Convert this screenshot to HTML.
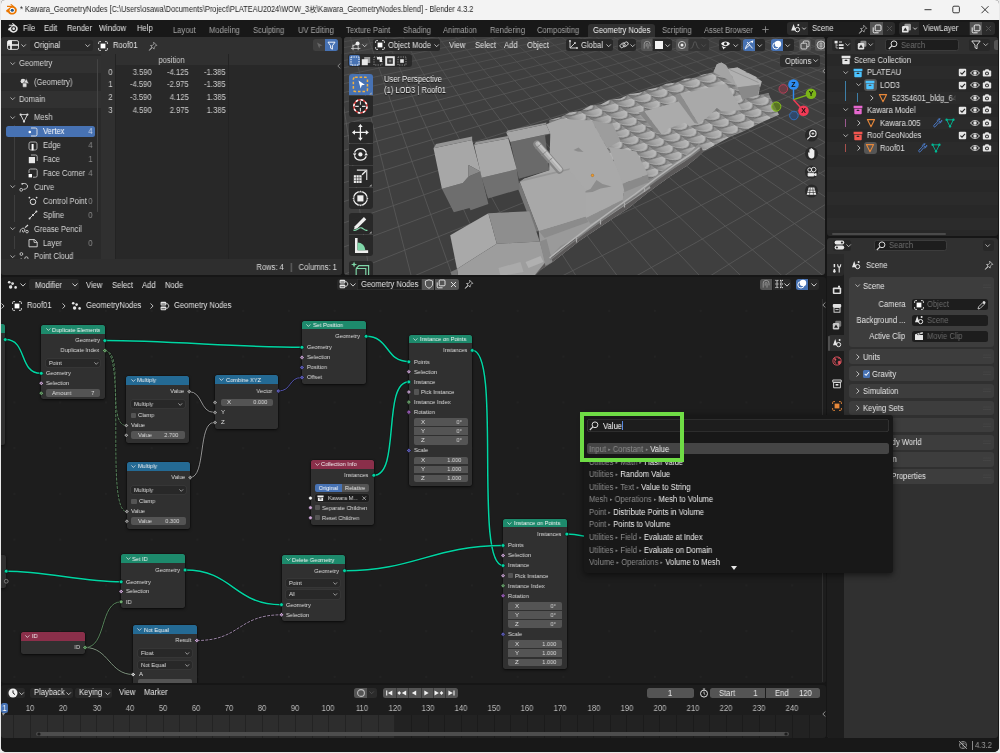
<!DOCTYPE html><html><head><meta charset="utf-8"><title>Blender</title><style>*{box-sizing:border-box;margin:0;padding:0}
html,body{width:1000px;height:753px;overflow:hidden;background:#e9e9e9;font-family:"Liberation Sans",sans-serif;font-size:8.3px;color:#d8d8d8}
#win{position:absolute;left:0;top:0;width:1000px;height:753px;background:#e9e9e9;overflow:hidden}
#frame{position:absolute;left:1px;top:0;width:998px;height:751.5px;background:#161616;border-radius:4px 4px 5px 5px}
#tm{position:absolute;left:1px;top:0;width:998px;height:37px;overflow:hidden;border-radius:4px 4px 0 0}
.a{position:absolute}
.t{position:absolute;white-space:nowrap;line-height:10px;height:10px;margin-top:-.7px;will-change:transform;transform:scaleX(.915);transform-origin:0 50%}
.t.r{transform-origin:100% 50%}
.t.c{transform-origin:50% 50%}
.area{position:absolute;overflow:hidden;border-radius:3px}
svg{position:absolute;overflow:visible}
.mn{color:#e4e4e4}
.tb{color:#a4a4a4}

#tm .t{margin-top:0}
</style></head><body>
<div id="win"><div id="frame"></div>
<div id="tm"><div class="a" style="left:0;top:0;width:998px;height:19.5px;background:#f3f3f3"></div>
<svg style="left:4px;top:4px" width="12" height="11" viewBox="0 0 24 22"><path d="M2 13 L11 6 L4 6 L4 3.6 L14 3.6 L10.5 1 L12.5 0 L22 7.5 C25 11 24 17 19 20 C14 22.5 8 21 6 16.5 L3.5 16.5 Z" fill="#ea7600"/><circle cx="14.5" cy="12.5" r="5.2" fill="#fff"/><circle cx="14.5" cy="12.5" r="3.2" fill="#265787"/></svg>
<div class="t" style="left:19px;top:5.4px;font-size:8.2px;color:#1b1b1b;transform-origin:0 50%;transform:scaleX(0.899)">* Kawara_GeometryNodes [C:\Users\osawa\Documents\Project\PLATEAU2024\WOW_3枚\Kawara_GeometryNodes.blend] - Blender 4.3.2</div>
<svg style="left:920px;top:3px" width="75" height="14" viewBox="0 0 75 14"><g stroke="#222" stroke-width="0.9" fill="none"><path d="M3.5 6.7h7"/><rect x="31.8" y="3.2" width="6.6" height="6.6" rx="1.2"/><path d="M60.5 3.2l7 7M67.5 3.2l-7 7"/></g></svg>
<div class="a" style="left:0;top:19.5px;width:998px;height:17.5px;background:#181818"></div>
<svg style="left:6px;top:23px" width="11" height="10" viewBox="0 0 24 22"><path d="M2 13 L11 6 L4 6 L4 3.6 L14 3.6 L10.5 1 L12.5 0 L22 7.5 C25 11 24 17 19 20 C14 22.5 8 21 6 16.5 L3.5 16.5 Z" fill="#e6e6e6"/><circle cx="14.5" cy="12.5" r="5.4" fill="#181818"/><circle cx="14.5" cy="12.5" r="3" fill="#e6e6e6"/></svg>
<div class="t mn" style="left:21.6px;top:23px">File</div>
<div class="t mn" style="left:43px;top:23px">Edit</div>
<div class="t mn" style="left:65.6px;top:23px">Render</div>
<div class="t mn" style="left:98.4px;top:23px">Window</div>
<div class="t mn" style="left:135.6px;top:23px">Help</div>
<div class="t tb" style="left:172.4px;top:25px">Layout</div>
<div class="t tb" style="left:207.6px;top:25px">Modeling</div>
<div class="t tb" style="left:251.6px;top:25px">Sculpting</div>
<div class="t tb" style="left:296.6px;top:25px">UV Editing</div>
<div class="t tb" style="left:345.4px;top:25px">Texture Paint</div>
<div class="t tb" style="left:402px;top:25px">Shading</div>
<div class="t tb" style="left:442.4px;top:25px">Animation</div>
<div class="t tb" style="left:489.4px;top:25px">Rendering</div>
<div class="t tb" style="left:536px;top:25px">Compositing</div>
<div class="a" style="left:587px;top:23.5px;width:66.5px;height:14px;background:#303030;border-radius:3px 3px 0 0"></div>
<div class="t" style="left:592px;top:25px;color:#f4f4f4">Geometry Nodes</div>
<div class="t tb" style="left:660.6px;top:25px">Scripting</div>
<div class="t tb" style="left:703.4px;top:25px">Asset Browser</div>
<svg style="left:761px;top:26px" width="7" height="7" viewBox="0 0 7 7"><path d="M3.5 0.3v6.4M0.3 3.5h6.4" stroke="#999" stroke-width="0.8"/></svg>
<!-- scene selector -->
<div class="a" style="left:786px;top:22px;width:108px;height:12.5px;background:#2b2b2b;border-radius:3px"></div>
<div class="a" style="left:806.6px;top:22px;width:62px;height:12.5px;background:#1d1d1d"></div>
<svg style="left:789px;top:23px" width="18" height="11" viewBox="0 0 18 11"><path d="M3.6 1 L6 7.6 L1.2 7.6Z" fill="#e6e6e6"/><circle cx="7.4" cy="6.6" r="2.2" fill="none" stroke="#e6e6e6" stroke-width="1"/><circle cx="8.3" cy="1.9" r="1" fill="#e6e6e6"/><path d="M12.3 4.6l1.8 1.8 1.8-1.8" stroke="#ddd" stroke-width=".9" fill="none"/></svg>
<div class="t" style="left:810.6px;top:23.2px;color:#e6e6e6">Scene</div>
<svg style="left:857px;top:23.5px" width="10" height="10" viewBox="0 0 10 10"><path d="M5.6 1.2l3.2 3.2-1 .2-1.6 1.6-.1 1.9-1.5-1.5L1.2 9.4l2.8-3.4-1.5-1.5 1.9-.1 1.6-1.6z" fill="none" stroke="#aaa" stroke-width=".8" stroke-linejoin="round"/></svg>
<div class="a" style="left:869px;top:22px;width:12.5px;height:12.5px;background:#545454"></div>
<svg style="left:870.5px;top:23.5px" width="10" height="10" viewBox="0 0 10 10"><rect x="3.2" y="1" width="5.8" height="5.8" rx="1" fill="none" stroke="#eee" stroke-width="1"/><path d="M1.2 3.4v4.2a1.2 1.2 0 0 0 1.2 1.2h4.2" fill="none" stroke="#eee" stroke-width="1"/></svg>
<svg style="left:884.5px;top:25px" width="7" height="7" viewBox="0 0 7 7"><path d="M1 1l5 5M6 1l-5 5" stroke="#555" stroke-width=".9"/></svg>
<!-- view layer -->
<div class="a" style="left:898px;top:22px;width:96px;height:12.5px;background:#2b2b2b;border-radius:3px"></div>
<div class="a" style="left:918px;top:22px;width:50px;height:12.5px;background:#1d1d1d"></div>
<svg style="left:900px;top:23px" width="18" height="11" viewBox="0 0 18 11"><rect x="3.4" y=".8" width="6.6" height="6.6" rx="1.2" fill="#9a9a9a"/><rect x="1" y="3" width="6.6" height="6.6" rx="1.2" fill="#e6e6e6"/><path d="M4.3 4.6l2 3.2H2.3z" fill="#2b2b2b"/><path d="M12.3 4.6l1.8 1.8 1.8-1.8" stroke="#ddd" stroke-width=".9" fill="none"/></svg>
<div class="t" style="left:922px;top:23.2px;color:#e6e6e6">ViewLayer</div>
<div class="a" style="left:968.6px;top:22px;width:12.5px;height:12.5px;background:#545454"></div>
<svg style="left:970px;top:23.5px" width="10" height="10" viewBox="0 0 10 10"><rect x="3.2" y="1" width="5.8" height="5.8" rx="1" fill="none" stroke="#eee" stroke-width="1"/><path d="M1.2 3.4v4.2a1.2 1.2 0 0 0 1.2 1.2h4.2" fill="none" stroke="#eee" stroke-width="1"/></svg>
<svg style="left:984px;top:25px" width="7" height="7" viewBox="0 0 7 7"><path d="M1 1l5 5M6 1l-5 5" stroke="#555" stroke-width=".9"/></svg>
</div>
<div class="area" id="ss" style="left:1px;top:37px;width:341px;height:238px;background:#282828">
<div class="a" style="left:0.0px;top:0.0px;width:341.0px;height:17.0px;background:#303030;"></div>
<svg style="left:6.4px;top:3.4px" width="12" height="10" viewBox="0 0 12 10"><rect x=".5" y=".6" width="11" height="8.8" rx="1.6" fill="#303030" stroke="#e8e8e8" stroke-width=".9"/><path d="M.5 2.200a1.600 1.600 0 0 1 1.600-1.600h2.700v4H.5z" fill="#f2f2f2"/><path d="M4 .6v8.800" stroke="#f2f2f2" stroke-width="1.700"/><path d="M.5 5h11" stroke="#f2f2f2" stroke-width="1.500"/></svg>
<svg style="left:19.5px;top:7.0px" width="5.3" height="3.5" viewBox="0 0 6 4"><path d="M.5 .5l2.5 2.6 2.5-2.6" stroke="#ddd" stroke-width=".9" fill="none"/></svg>
<div class="a" style="left:29.0px;top:2.6px;width:62.5px;height:11.6px;background:#282828;border-radius:2.5px"></div>
<div class="t" style="left:33.0px;top:4.0px;color:#e6e6e6;">Original</div>
<svg style="left:83.5px;top:7.0px" width="5.3" height="3.5" viewBox="0 0 6 4"><path d="M.5 .5l2.5 2.6 2.5-2.6" stroke="#ddd" stroke-width=".9" fill="none"/></svg>
<svg style="left:97.0px;top:3.5px" width="10" height="10" viewBox="0 0 10 10"><rect x="2.6" y="2.6" width="4.8" height="4.8" fill="#fff"/><path d="M.6 3V1.6a1 1 0 0 1 1-1H3M7 .6h1.4a1 1 0 0 1 1 1V3M9.4 7v1.4a1 1 0 0 1-1 1H7M3 9.4H1.6a1 1 0 0 1-1-1V7" stroke="#e0e0e0" stroke-width=".9" fill="none"/></svg>
<div class="t" style="left:112.0px;top:4.0px;color:#e6e6e6;">Roof01</div>
<svg style="left:147.0px;top:3.5px" width="10" height="10" viewBox="0 0 10 10"><path d="M5.6 1.2l3.2 3.2-1 .2-1.6 1.6-.1 1.9-1.5-1.5L1.2 9.4l2.8-3.4-1.5-1.5 1.9-.1 1.6-1.6z" fill="none" stroke="#aaa" stroke-width=".8" stroke-linejoin="round"/></svg>
<div class="a" style="left:311.5px;top:2.2px;width:12.5px;height:12.2px;background:#3f3f3f;border-radius:2.5px 0 0 2.5px"></div>
<svg style="left:313.5px;top:3.8px" width="9" height="9" viewBox="0 0 9 9"><path d="M2 1.6l5.6 2.8-2.6.6-.8 2.6z" fill="#666"/></svg>
<div class="a" style="left:324.0px;top:2.2px;width:12.5px;height:12.2px;background:#4772b3;border-radius:0 2.5px 2.5px 0"></div>
<svg style="left:325.8px;top:3.8px" width="9" height="9" viewBox="0 0 9 9"><path d="M1 1.2h7L5.4 4.8v3.4l-1.8-1V4.8z" fill="none" stroke="#fff" stroke-width=".9" stroke-linejoin="round"/></svg>
<div class="a" style="left:0.0px;top:17.0px;width:100.0px;height:205.0px;background:#2a2a2a;"></div>
<div class="a" style="left:0.0px;top:19.0px;width:100.0px;height:16.6px;background:#313131;"></div>
<div class="a" style="left:0.0px;top:54.2px;width:100.0px;height:16.6px;background:#313131;"></div>
<svg style="left:8.6px;top:24.7px" width="5.3" height="3.5" viewBox="0 0 6 4"><path d="M.5 .5l2.5 2.6 2.5-2.6" stroke="#c8c8c8" stroke-width=".9" fill="none"/></svg>
<div class="t" style="left:18.0px;top:22.1px;color:#d8d8d8;">Geometry</div>
<svg style="left:19.0px;top:40.5px" width="10" height="10" viewBox="0 0 10 10"><circle cx="3" cy="3.2" r="2.4" fill="#ddd"/><path d="M6.2 0.6l2.6 4.8H3.6z" fill="#ddd" stroke="#2a2a2a" stroke-width=".5"/><rect x="2.6" y="5" width="4.2" height="4.2" rx=".8" fill="#ddd" stroke="#2a2a2a" stroke-width=".5"/></svg>
<div class="t" style="left:33.3px;top:40.9px;color:#d8d8d8;">(Geometry)</div>
<svg style="left:8.6px;top:60.0px" width="5.3" height="3.5" viewBox="0 0 6 4"><path d="M.5 .5l2.5 2.6 2.5-2.6" stroke="#c8c8c8" stroke-width=".9" fill="none"/></svg>
<div class="t" style="left:18.0px;top:57.4px;color:#d8d8d8;">Domain</div>
<div class="a" style="left:96.3px;top:21.5px;width:1.0px;height:153.0px;background:#444;border-radius:1px"></div>
<div class="a" style="left:12.6px;top:87.5px;width:0.8px;height:55.0px;background:#3e3e3e;"></div>
<div class="a" style="left:12.6px;top:157.5px;width:0.8px;height:27.0px;background:#3e3e3e;"></div>
<div class="a" style="left:12.6px;top:199.0px;width:0.8px;height:13.0px;background:#3e3e3e;"></div>
<svg style="left:9.4px;top:78.7px" width="5.3" height="3.5" viewBox="0 0 6 4"><path d="M.5 .5l2.5 2.6 2.5-2.6" stroke="#c8c8c8" stroke-width=".9" fill="none"/></svg>
<svg style="left:18.3px;top:75.7px" width="10" height="10" viewBox="0 0 10 10"><path d="M1.6 1.6h6.8L5 8.6z" fill="none" stroke="#ddd" stroke-width=".9"/><circle cx="1.6" cy="1.6" r="1.1" fill="#ddd"/><circle cx="8.4" cy="1.6" r="1.1" fill="#ddd"/><circle cx="5" cy="8.6" r="1.1" fill="#ddd"/></svg>
<div class="t" style="left:33.0px;top:76.1px;color:#d8d8d8;">Mesh</div>
<div class="a" style="left:5.4px;top:89.0px;width:89.0px;height:11.2px;background:#4772b3;border-radius:2.5px"></div>
<svg style="left:27.2px;top:89.6px" width="10" height="10" viewBox="0 0 10 10"><path d="M3 1h4.4a1.6 1.6 0 0 1 1.6 1.6v4.8A1.6 1.6 0 0 1 7.4 9H3" fill="none" stroke="#e8e8e8" stroke-width=".9"/><circle cx="1.8" cy="5" r="1.3" fill="#fff"/></svg>
<div class="t" style="left:41.8px;top:90.0px;color:#fff;">Vertex</div>
<div class="t r" style="right:249.4px;top:90.0px;color:#c8d4ea;">4</div>
<svg style="left:27.2px;top:103.5px" width="10" height="10" viewBox="0 0 10 10"><rect x="1" y="1" width="8" height="8" rx="1.8" fill="none" stroke="#bbb" stroke-width=".9"/><rect x="3.6" y="3" width="2" height="6.4" fill="#fff"/></svg>
<div class="t" style="left:41.8px;top:103.9px;color:#d8d8d8;">Edge</div>
<div class="t r" style="right:249.4px;top:103.9px;color:#8a8a8a;">4</div>
<svg style="left:27.2px;top:117.4px" width="10" height="10" viewBox="0 0 10 10"><path d="M3 1h4.6A1.6 1.6 0 0 1 9.2 2.6V7" fill="none" stroke="#bbb" stroke-width=".9"/><rect x=".8" y="3" width="6.2" height="6.2" fill="#e8e8e8"/></svg>
<div class="t" style="left:41.8px;top:117.8px;color:#d8d8d8;">Face</div>
<div class="t r" style="right:249.4px;top:117.8px;color:#8a8a8a;">1</div>
<svg style="left:27.2px;top:131.3px" width="10" height="10" viewBox="0 0 10 10"><path d="M1 5V2.6A1.6 1.6 0 0 1 2.6 1h5A1.6 1.6 0 0 1 9.2 2.6v5A1.6 1.6 0 0 1 7.6 9.2H5" fill="none" stroke="#bbb" stroke-width=".9"/><rect x=".6" y="6" width="3.4" height="3.4" fill="#fff"/></svg>
<div class="t" style="left:41.8px;top:131.7px;color:#d8d8d8;">Face Corner</div>
<div class="t r" style="right:249.4px;top:131.7px;color:#8a8a8a;">4</div>
<svg style="left:9.4px;top:148.2px" width="5.3" height="3.5" viewBox="0 0 6 4"><path d="M.5 .5l2.5 2.6 2.5-2.6" stroke="#c8c8c8" stroke-width=".9" fill="none"/></svg>
<svg style="left:18.3px;top:145.2px" width="10" height="10" viewBox="0 0 10 10"><path d="M3.6 1.6C9.5 .4 10.6 7 4.4 7.4" fill="none" stroke="#ddd" stroke-width=".9"/><circle cx="2.2" cy="7.8" r="1.4" fill="none" stroke="#ddd" stroke-width=".8"/><circle cx="3.2" cy="1.8" r=".9" fill="#ddd"/></svg>
<div class="t" style="left:33.0px;top:145.6px;color:#d8d8d8;">Curve</div>
<svg style="left:27.2px;top:159.1px" width="10" height="10" viewBox="0 0 10 10"><circle cx="5" cy="5.8" r="2.8" fill="none" stroke="#ddd" stroke-width="1"/><circle cx="1.4" cy="1.6" r=".9" fill="#ddd"/><circle cx="8.6" cy="1.6" r=".9" fill="#ddd"/></svg>
<div class="t" style="left:41.8px;top:159.5px;color:#d8d8d8;">Control Point</div>
<div class="t r" style="right:249.4px;top:159.5px;color:#8a8a8a;">0</div>
<svg style="left:27.2px;top:173.0px" width="10" height="10" viewBox="0 0 10 10"><path d="M1.6 8.4L8.4 1.6" stroke="#ddd" stroke-width=".9"/><circle cx="1.6" cy="8.4" r="1" fill="#ddd"/><circle cx="8.4" cy="1.6" r="1" fill="#ddd"/><circle cx="5" cy="5" r="1.1" fill="#ddd"/></svg>
<div class="t" style="left:41.8px;top:173.4px;color:#d8d8d8;">Spline</div>
<div class="t r" style="right:249.4px;top:173.4px;color:#8a8a8a;">0</div>
<svg style="left:9.4px;top:189.9px" width="5.3" height="3.5" viewBox="0 0 6 4"><path d="M.5 .5l2.5 2.6 2.5-2.6" stroke="#c8c8c8" stroke-width=".9" fill="none"/></svg>
<svg style="left:18.3px;top:186.9px" width="10" height="10" viewBox="0 0 10 10"><path d="M1 8.4C1 4 5.6 3 5.8 5.8 6 8.6 2.6 8.8 3.6 6.2" fill="none" stroke="#ddd" stroke-width=".9"/><path d="M6 3.6L9 1" stroke="#ddd" stroke-width="1.2"/><circle cx="8" cy="7.6" r="1.3" fill="none" stroke="#ddd" stroke-width=".8"/></svg>
<div class="t" style="left:33.0px;top:187.3px;color:#d8d8d8;">Grease Pencil</div>
<svg style="left:27.2px;top:200.8px" width="10" height="10" viewBox="0 0 10 10"><path d="M1 1.6h5.6L9.2 4v4.8H1z" fill="none" stroke="#ddd" stroke-width=".9" stroke-linejoin="round"/><path d="M6 1.6V4.4h3" fill="none" stroke="#ddd" stroke-width=".8"/></svg>
<div class="t" style="left:41.8px;top:201.2px;color:#d8d8d8;">Layer</div>
<div class="t r" style="right:249.4px;top:201.2px;color:#8a8a8a;">0</div>
<svg style="left:9.4px;top:217.7px" width="5.3" height="3.5" viewBox="0 0 6 4"><path d="M.5 .5l2.5 2.6 2.5-2.6" stroke="#c8c8c8" stroke-width=".9" fill="none"/></svg>
<svg style="left:18.3px;top:214.7px" width="10" height="10" viewBox="0 0 10 10"><circle cx="2.4" cy="2" r="1.4" fill="none" stroke="#ddd" stroke-width=".8"/><circle cx="7.4" cy="6.4" r="1.6" fill="none" stroke="#ddd" stroke-width=".8"/><circle cx="2.2" cy="7.4" r="1" fill="#ddd"/></svg>
<div class="t" style="left:33.0px;top:215.1px;color:#d8d8d8;">Point Cloud</div>
<div class="a" style="left:100.3px;top:17.0px;width:13.8px;height:205.0px;background:#303030;"></div>
<div class="a" style="left:100.3px;top:17.0px;width:240.0px;height:10.8px;background:#303030;"></div>
<div class="a" style="left:113.8px;top:17.0px;width:0.7px;height:205.0px;background:#232323;"></div>
<div class="a" style="left:227.2px;top:17.0px;width:0.7px;height:205.0px;background:#232323;"></div>
<div class="t c" style="left:114px;top:18.3px;width:113px;text-align:center;color:#d0d0d0">position</div>
<div class="t r" style="right:229.6px;top:30.2px;color:#d0d0d0;">0</div>
<div class="t r" style="right:190.6px;top:30.2px;color:#d0d0d0;">3.590</div>
<div class="t r" style="right:153.4px;top:30.2px;color:#d0d0d0;">-4.125</div>
<div class="t r" style="right:116.4px;top:30.2px;color:#d0d0d0;">-1.385</div>
<div class="t r" style="right:229.6px;top:42.9px;color:#d0d0d0;">1</div>
<div class="t r" style="right:190.6px;top:42.9px;color:#d0d0d0;">-4.590</div>
<div class="t r" style="right:153.4px;top:42.9px;color:#d0d0d0;">-2.975</div>
<div class="t r" style="right:116.4px;top:42.9px;color:#d0d0d0;">-1.385</div>
<div class="t r" style="right:229.6px;top:55.7px;color:#d0d0d0;">2</div>
<div class="t r" style="right:190.6px;top:55.7px;color:#d0d0d0;">-3.590</div>
<div class="t r" style="right:153.4px;top:55.7px;color:#d0d0d0;">4.125</div>
<div class="t r" style="right:116.4px;top:55.7px;color:#d0d0d0;">1.385</div>
<div class="t r" style="right:229.6px;top:68.5px;color:#d0d0d0;">3</div>
<div class="t r" style="right:190.6px;top:68.5px;color:#d0d0d0;">4.590</div>
<div class="t r" style="right:153.4px;top:68.5px;color:#d0d0d0;">2.975</div>
<div class="t r" style="right:116.4px;top:68.5px;color:#d0d0d0;">1.385</div>
<svg style="left:336.4px;top:25.5px" width="4" height="6" viewBox="0 0 4 6"><path d="M3.4 .5L.8 3l2.6 2.5" stroke="#999" stroke-width=".8" fill="none"/></svg>
<div class="a" style="left:0.0px;top:222.0px;width:341.0px;height:16.0px;background:#2e2e2e;"></div>
<div class="t r" style="right:4.8px;top:225.4px;color:#dcdcdc;">Rows: 4 &nbsp;&nbsp;<span style="color:#999">|</span>&nbsp;&nbsp; Columns: 1</div>
</div>
<div class="area" id="vp" style="left:343.5px;top:37px;width:481.5px;height:237.6px;background:#3f3f3f">
<svg style="left:0;top:0" width="481.5" height="237.6" viewBox="343.5 37 481.5 237.6"><defs><linearGradient id="gf" x1="0" y1="0" x2="0" y2="1"><stop offset="0" stop-color="#3f3f3f" stop-opacity=".45"/><stop offset=".3" stop-color="#3f3f3f" stop-opacity="0"/></linearGradient></defs><g stroke="#5a5a5a" stroke-width=".8">
<path d="M-309.2 30.0L-1284.6 300.0"/>
<path d="M-292.3 30.0L-1241.0 300.0"/>
<path d="M-275.5 30.0L-1197.4 300.0"/>
<path d="M-258.6 30.0L-1153.7 300.0"/>
<path d="M-241.7 30.0L-1110.1 300.0"/>
<path d="M-224.9 30.0L-1066.5 300.0"/>
<path d="M-208.0 30.0L-1022.9 300.0"/>
<path d="M-191.2 30.0L-979.2 300.0"/>
<path d="M-174.3 30.0L-935.6 300.0"/>
<path d="M-157.5 30.0L-892.0 300.0"/>
<path d="M-140.6 30.0L-848.4 300.0"/>
<path d="M-123.8 30.0L-804.7 300.0"/>
<path d="M-106.9 30.0L-761.1 300.0"/>
<path d="M-90.1 30.0L-717.5 300.0"/>
<path d="M-73.2 30.0L-673.9 300.0"/>
<path d="M-56.3 30.0L-630.2 300.0"/>
<path d="M-39.5 30.0L-586.6 300.0"/>
<path d="M-22.6 30.0L-543.0 300.0"/>
<path d="M-5.8 30.0L-499.4 300.0"/>
<path d="M11.1 30.0L-455.7 300.0"/>
<path d="M27.9 30.0L-412.1 300.0"/>
<path d="M44.8 30.0L-368.5 300.0"/>
<path d="M61.6 30.0L-324.9 300.0"/>
<path d="M78.5 30.0L-281.2 300.0"/>
<path d="M95.4 30.0L-237.6 300.0"/>
<path d="M112.2 30.0L-194.0 300.0"/>
<path d="M129.1 30.0L-150.4 300.0"/>
<path d="M145.9 30.0L-106.7 300.0"/>
<path d="M162.8 30.0L-63.1 300.0"/>
<path d="M179.6 30.0L-19.5 300.0"/>
<path d="M196.5 30.0L24.1 300.0"/>
<path d="M213.3 30.0L67.8 300.0"/>
<path d="M230.2 30.0L111.4 300.0"/>
<path d="M247.1 30.0L155.0 300.0"/>
<path d="M263.9 30.0L198.7 300.0"/>
<path d="M280.8 30.0L242.3 300.0"/>
<path d="M297.6 30.0L285.9 300.0"/>
<path d="M314.5 30.0L329.5 300.0"/>
<path d="M331.3 30.0L373.2 300.0"/>
<path d="M348.2 30.0L416.8 300.0"/>
<path d="M365.0 30.0L460.4 300.0"/>
<path d="M381.9 30.0L504.0 300.0"/>
<path d="M398.8 30.0L547.7 300.0"/>
<path d="M415.6 30.0L591.3 300.0"/>
<path d="M432.5 30.0L634.9 300.0"/>
<path d="M449.3 30.0L678.5 300.0"/>
<path d="M466.2 30.0L722.2 300.0"/>
<path d="M483.0 30.0L765.8 300.0"/>
<path d="M499.9 30.0L809.4 300.0"/>
<path d="M516.7 30.0L853.0 300.0"/>
<path d="M533.6 30.0L896.7 300.0"/>
<path d="M550.5 30.0L940.3 300.0"/>
<path d="M567.3 30.0L983.9 300.0"/>
<path d="M584.2 30.0L1027.5 300.0"/>
<path d="M601.0 30.0L1071.2 300.0"/>
<path d="M617.9 30.0L1114.8 300.0"/>
<path d="M634.7 30.0L1158.4 300.0"/>
<path d="M651.6 30.0L1202.0 300.0"/>
<path d="M668.4 30.0L1245.7 300.0"/>
<path d="M685.3 30.0L1289.3 300.0"/>
<path d="M702.1 30.0L1332.9 300.0"/>
<path d="M719.0 30.0L1376.5 300.0"/>
<path d="M735.9 30.0L1420.2 300.0"/>
<path d="M752.7 30.0L1463.8 300.0"/>
<path d="M769.6 30.0L1507.4 300.0"/>
<path d="M786.4 30.0L1551.0 300.0"/>
<path d="M803.3 30.0L1594.7 300.0"/>
<path d="M820.1 30.0L1638.3 300.0"/>
<path d="M837.0 30.0L1681.9 300.0"/>
<path d="M853.8 30.0L1725.5 300.0"/>
<path d="M870.7 30.0L1769.2 300.0"/>
<path d="M887.6 30.0L1812.8 300.0"/>
<path d="M904.4 30.0L1856.4 300.0"/>
<path d="M921.3 30.0L1900.0 300.0"/>
<path d="M938.1 30.0L1943.7 300.0"/>
<path d="M955.0 30.0L1987.3 300.0"/>
<path d="M971.8 30.0L2030.9 300.0"/>
<path d="M988.7 30.0L2074.5 300.0"/>
<path d="M1005.5 30.0L2118.2 300.0"/>
<path d="M1022.4 30.0L2161.8 300.0"/>
<path d="M1039.3 30.0L2205.4 300.0"/>
<path d="M1056.1 30.0L2249.1 300.0"/>
<path d="M1073.0 30.0L2292.7 300.0"/>
<path d="M1089.8 30.0L2336.3 300.0"/>
<path d="M1106.7 30.0L2379.9 300.0"/>
<path d="M1123.5 30.0L2423.6 300.0"/>
<path d="M1140.4 30.0L2467.2 300.0"/>
<path d="M1157.2 30.0L2510.8 300.0"/>
<path d="M1174.1 30.0L2554.4 300.0"/>
<path d="M1191.0 30.0L2598.1 300.0"/>
<path d="M1207.8 30.0L2641.7 300.0"/>
<path d="M1224.7 30.0L2685.3 300.0"/>
<path d="M1241.5 30.0L2728.9 300.0"/>
<path d="M1258.4 30.0L2772.6 300.0"/>
<path d="M1275.2 30.0L2816.2 300.0"/>
<path d="M1292.1 30.0L2859.8 300.0"/>
<path d="M1308.9 30.0L2903.4 300.0"/>
<path d="M1325.8 30.0L2947.1 300.0"/>
<path d="M1342.7 30.0L2990.7 300.0"/>
<path d="M1359.5 30.0L3034.3 300.0"/>
<path d="M-164.0 30.0L-2616.1 300.0"/>
<path d="M-133.7 30.0L-2537.9 300.0"/>
<path d="M-103.5 30.0L-2459.6 300.0"/>
<path d="M-73.2 30.0L-2381.3 300.0"/>
<path d="M-43.0 30.0L-2303.1 300.0"/>
<path d="M-12.8 30.0L-2224.8 300.0"/>
<path d="M17.5 30.0L-2146.6 300.0"/>
<path d="M47.7 30.0L-2068.3 300.0"/>
<path d="M77.9 30.0L-1990.0 300.0"/>
<path d="M108.2 30.0L-1911.8 300.0"/>
<path d="M138.4 30.0L-1833.5 300.0"/>
<path d="M168.7 30.0L-1755.2 300.0"/>
<path d="M198.9 30.0L-1677.0 300.0"/>
<path d="M229.1 30.0L-1598.7 300.0"/>
<path d="M259.4 30.0L-1520.4 300.0"/>
<path d="M289.6 30.0L-1442.2 300.0"/>
<path d="M319.9 30.0L-1363.9 300.0"/>
<path d="M350.1 30.0L-1285.7 300.0"/>
<path d="M380.3 30.0L-1207.4 300.0"/>
<path d="M410.6 30.0L-1129.1 300.0"/>
<path d="M440.8 30.0L-1050.9 300.0"/>
<path d="M471.0 30.0L-972.6 300.0"/>
<path d="M501.3 30.0L-894.3 300.0"/>
<path d="M531.5 30.0L-816.1 300.0"/>
<path d="M561.8 30.0L-737.8 300.0"/>
<path d="M592.0 30.0L-659.5 300.0"/>
<path d="M622.2 30.0L-581.3 300.0"/>
<path d="M652.5 30.0L-503.0 300.0"/>
<path d="M682.7 30.0L-424.7 300.0"/>
<path d="M712.9 30.0L-346.5 300.0"/>
<path d="M743.2 30.0L-268.2 300.0"/>
<path d="M773.4 30.0L-190.0 300.0"/>
<path d="M803.7 30.0L-111.7 300.0"/>
<path d="M833.9 30.0L-33.4 300.0"/>
<path d="M864.1 30.0L44.8 300.0"/>
<path d="M894.4 30.0L123.1 300.0"/>
<path d="M924.6 30.0L201.4 300.0"/>
<path d="M954.9 30.0L279.6 300.0"/>
<path d="M985.1 30.0L357.9 300.0"/>
<path d="M1015.3 30.0L436.2 300.0"/>
<path d="M1045.6 30.0L514.4 300.0"/>
<path d="M1075.8 30.0L592.7 300.0"/>
<path d="M1106.0 30.0L670.9 300.0"/>
<path d="M1136.3 30.0L749.2 300.0"/>
<path d="M1166.5 30.0L827.5 300.0"/>
<path d="M1196.8 30.0L905.7 300.0"/>
<path d="M1227.0 30.0L984.0 300.0"/>
<path d="M1257.2 30.0L1062.3 300.0"/>
<path d="M1287.5 30.0L1140.5 300.0"/>
<path d="M1317.7 30.0L1218.8 300.0"/>
<path d="M1348.0 30.0L1297.1 300.0"/>
<path d="M1378.2 30.0L1375.3 300.0"/>
<path d="M1408.4 30.0L1453.6 300.0"/>
<path d="M1438.7 30.0L1531.8 300.0"/>
<path d="M1468.9 30.0L1610.1 300.0"/>
<path d="M1499.1 30.0L1688.4 300.0"/>
<path d="M1529.4 30.0L1766.6 300.0"/>
<path d="M1559.6 30.0L1844.9 300.0"/>
<path d="M1589.9 30.0L1923.2 300.0"/>
<path d="M1620.1 30.0L2001.4 300.0"/>
<path d="M1650.3 30.0L2079.7 300.0"/>
<path d="M1680.6 30.0L2158.0 300.0"/>
<path d="M1710.8 30.0L2236.2 300.0"/>
<path d="M1741.1 30.0L2314.5 300.0"/>
<path d="M1771.3 30.0L2392.7 300.0"/>
<path d="M1801.5 30.0L2471.0 300.0"/>
<path d="M1831.8 30.0L2549.3 300.0"/>
<path d="M1862.0 30.0L2627.5 300.0"/>
<path d="M1892.2 30.0L2705.8 300.0"/>
<path d="M1922.5 30.0L2784.1 300.0"/>
<path d="M1952.7 30.0L2862.3 300.0"/>
<path d="M1983.0 30.0L2940.6 300.0"/>
<path d="M2013.2 30.0L3018.9 300.0"/>
<path d="M2043.4 30.0L3097.1 300.0"/>
<path d="M2073.7 30.0L3175.4 300.0"/>
<path d="M2103.9 30.0L3253.7 300.0"/>
<path d="M2134.1 30.0L3331.9 300.0"/>
<path d="M2164.4 30.0L3410.2 300.0"/>
<path d="M2194.6 30.0L3488.4 300.0"/>
<path d="M2224.9 30.0L3566.7 300.0"/>
</g><rect x="343.5" y="37" width="481.5" height="237.6" fill="url(#gf)"/>
<defs><linearGradient id="tg" x1="0" y1="0" x2="1" y2="0"><stop offset="0" stop-color="#808080"/><stop offset=".45" stop-color="#a4a4a4"/><stop offset="1" stop-color="#b9b9b9"/></linearGradient>
<pattern id="tiles" width="17" height="9.2" patternUnits="userSpaceOnUse" patternTransform="translate(566,118) rotate(-16.7) skewX(36)">
<rect width="17" height="9.2" fill="url(#tg)"/><path d="M0 3.600C4 9.800 13 9.800 17 3.600V9.200H0Z" fill="#6c6c6c" opacity=".5"/><path d="M0 3.600C4 9.800 13 9.800 17 3.600" stroke="#666" stroke-width=".9" fill="none" opacity=".9"/><path d="M0 1.600C4 7.800 13 7.800 17 1.600" stroke="#c2c2c2" stroke-width="1" fill="none" opacity=".55"/></pattern>
<linearGradient id="pipe" x1="0" y1="0" x2="1" y2="0"><stop offset="0" stop-color="#8a8a8a"/><stop offset=".45" stop-color="#bcbcbc"/><stop offset="1" stop-color="#929292"/></linearGradient></defs>
<polygon points="548.7,120.0 560.0,117.1 569.2,112.5 580.0,111.0 589.9,105.6 600.0,104.5 609.4,99.8 620.0,98.5 629.0,94.1 639.0,92.8 647.4,89.5 657.0,87.6 665.8,83.7 676.0,82.5 684.2,79.1 694.0,77.8 702.6,74.5 712.9,72.2 716.4,64.2 721.0,62.4 725.6,65.3 727.9,68.8 737.1,67.6 755.5,76.8 761.2,81.4 757.8,95.2 768.1,92.9 769.3,96.4 778.5,114.8 762.4,121.7 744.0,130.9 730.2,136.6 702.6,151.6 696.0,158.0 686.0,166.0 670.0,176.0 648.0,192.0 628.0,208.0 604.0,224.0 580.0,240.0 552.0,262.0 545.0,262.0 586.0,218.0 585.0,189.0 568.6,169.9 549.8,133.6" fill="url(#tiles)" />
<polygon points="702.6,151.6 696.0,158.0 686.0,166.0 670.0,176.0 648.0,192.0 628.0,208.0 604.0,224.0 580.0,240.0 552.0,262.0 540.0,270.0 532.0,278.0 528.0,270.0 536.0,262.0 548.0,254.0 576.0,232.0 600.0,216.0 624.0,200.0 644.0,184.0 666.0,168.0 682.0,158.0 692.0,150.0 698.6,143.6" fill="#8e8e8e" />
<polygon points="702.6,151.6 696.0,158.0 686.0,166.0 670.0,176.0 648.0,192.0 628.0,208.0 604.0,224.0 580.0,240.0 552.0,262.0 540.0,270.0 532.0,278.0 530.2,273.6 538.2,265.6 550.2,257.6 578.2,235.6 602.2,219.6 626.2,203.6 646.2,187.6 668.2,171.6 684.2,161.6 694.2,153.6 700.8,147.2" fill="#5b5959" />
<polygon points="545.6,124.2 560.0,119.0 591.0,120.5 606.0,147.0 624.4,183.8 622.0,200.0 586.0,218.0 538.2,231.1 519.4,181.9 523.6,178.7 548.7,170.3 549.8,133.6" fill="#a9a9a9" />
<polygon points="538.2,231.1 586.0,218.0 622.0,200.0 624.4,186.0 648.0,183.0 650.0,188.0 600.0,222.0 580.0,236.0 560.0,246.0 545.0,262.0 539.3,241.6" fill="#9a9a9a" />
<polygon points="538.2,231.1 585.0,216.5 588.0,222.0 544.0,238.0" fill="#8b8b8b" />
<polygon points="586.0,218.0 622.0,200.0 623.0,205.0 590.0,224.0" fill="#8d8d8d" />
<polygon points="608.3,147.0 635.9,151.6 647.4,174.6 622.1,183.8" fill="#a7a7a7" />
<polygon points="622.1,183.8 647.4,174.6 648.5,182.0 624.0,192.0" fill="#8a8a8a" />
<polygon points="591.0,120.5 612.0,124.0 620.0,141.0 608.3,147.0 606.0,147.0" fill="#9d9d9d" />
<polygon points="573.0,150.0 578.0,147.5 583.0,152.0 577.0,151.5" fill="#8c8c8c" />
<polygon points="596.0,180.0 602.0,184.0 611.0,186.5 600.0,188.5 592.0,192.0 580.0,193.0 590.0,189.0" fill="#8d8d8d" />
<polygon points="509.9,142.0 544.5,134.7 548.7,170.3 518.3,178.7" fill="#6a6a6a" />
<polygon points="505.7,132.6 545.6,124.2 549.8,133.6 509.9,142.0" fill="#a6a6a6" />
<polygon points="505.7,132.6 507.0,130.5 546.0,122.5 545.6,124.2" fill="#949494" />
<polygon points="519.4,181.9 568.6,169.9 585.0,189.2 585.0,216.5 538.2,231.1" fill="#a8a8a8" />
<polygon points="519.4,181.9 523.6,178.7 569.7,168.2 568.6,169.9" fill="#969696" />
<polygon points="519.4,181.9 538.2,231.1 534.0,232.0 516.5,186.0" fill="#777" />
<path d="M536.6 144.2L559 170" stroke="#868686" stroke-width="7.6" stroke-linecap="round"/>
<path d="M537.200 143.700L559.600 169.500" stroke="#b4b4b4" stroke-width="4.600" stroke-linecap="round"/>
<path d="M537.900 143.100L560.300 168.900" stroke="#c6c6c6" stroke-width="1.600" stroke-linecap="round"/>
<path d="M534.600 149l5.800-4.800M540.400 155.800l5.800-4.800M546.200 162.600l5.800-4.800" stroke="#7f7f7f" stroke-width=".8"/>
<polygon points="441.4,188.8 462.3,182.9 468.0,176.6 479.9,171.4 487.9,203.9 470.1,210.2 469.0,208.0 453.3,212.3" fill="#6e6e6e" />
<polygon points="433.0,148.3 471.6,139.9 479.9,171.4 468.0,165.1 468.0,176.6 462.3,182.9 441.4,188.8" fill="#a7a7a7" />
<polygon points="433.0,148.3 435.5,144.1 471.6,136.4 471.6,139.9" fill="#959595" />
<polygon points="468.0,165.1 479.9,171.4 468.0,176.6" fill="#8b8b8b" />
<polygon points="481.2,177.7 516.2,169.3 519.4,189.2 487.5,198.6" fill="#707070" />
<polygon points="473.6,144.7 507.8,138.5 516.2,169.3 481.2,177.7" fill="#a8a8a8" />
<polygon points="473.6,144.7 475.3,142.0 508.9,135.7 507.8,138.5" fill="#969696" />
<polygon points="449.7,235.3 487.9,213.3 496.3,243.7 456.5,268.9" fill="#a9a9a9" />
<polygon points="487.9,213.3 528.8,211.2 539.3,241.6 496.3,243.7" fill="#8e8e8e" />
<polygon points="456.5,268.9 496.3,243.7 539.3,241.6 545.0,262.0 532.0,278.0 458.0,278.0" fill="#9d9d9d" />
<polygon points="456.5,268.9 458.0,278.0 452.0,278.0 450.0,272.0" fill="#777" />
<polygon points="539.3,241.6 546.0,239.0 552.0,262.0 545.0,266.0" fill="#8a8a8a" />
<polygon points="525.0,262.0 540.0,256.0 543.0,262.0 528.0,268.0" fill="#b0b0b0" />
<polygon points="498.0,268.0 520.0,262.0 523.0,272.0 500.0,276.0" fill="#aaa" />
<path d="M699 147.500L690 154.500 676 163.500 655 178.500 634 194.500 610 211.500 588 227.500 562 247.500 549 258" stroke="#b4b4b4" stroke-width="1.500" fill="none" stroke-linejoin="round"/>
<path d="M699.600 149.400L690.600 156.400 676.600 165.400 655.600 180.400 634.600 196.400 610.600 213.400 588.600 229.400 562.600 249.400 549.600 260" stroke="#7c7c7c" stroke-width="1.300" fill="none" stroke-linejoin="round"/>
<path d="M644 187v5M624 202.500v5M600 219.500v5M576 237.500v5" stroke="#a8a8a8" stroke-width="1.200"/>
<polygon points="638.0,112.6 643.9,111.3 661.2,134.3 656.0,133.0" fill="#868686" />
<polygon points="643.9,111.3 679.6,101.0 698.0,124.0 688.8,126.3 684.2,122.8 668.1,128.6 661.2,134.3" fill="#ababab" />
<polygon points="679.6,94.1 725.6,83.7 741.7,110.2 721.0,111.3 716.4,107.9 707.2,117.1 698.0,124.0" fill="#a9a9a9" />
<polygon points="674.0,96.0 679.6,94.1 698.0,124.0 694.0,123.0" fill="#8c8c8c" />
<polygon points="716.4,64.2 721.0,62.4 725.6,65.3 737.1,87.2 727.9,80.0 712.9,72.2" fill="#a4a4a4" />
<polygon points="727.9,68.8 737.1,67.6 761.2,81.4 759.0,85.0 737.1,87.2" fill="#b0b0b0" />
<polygon points="737.1,87.2 759.0,84.5 757.8,95.2 741.7,99.8" fill="#898989" />
<path d="M729 69.500L758 82.500" stroke="#8a8a8a" stroke-width=".7"/>
<circle cx="592" cy="175.4" r="1.3" fill="#f29b2c" stroke="#8a5a18" stroke-width=".4"/>
</svg>
<svg style="left:6.5px;top:3.5px" width="12" height="10" viewBox="0 0 12 10"><path d="M1 7.4h9.4M2.4 5.2l6-3.2" stroke="#ddd" stroke-width=".8" fill="none"/><circle cx="7.6" cy="2.4" r="2" fill="#eee"/><path d="M3 3.6v5.6M8.2 4.6v4.6" stroke="#ddd" stroke-width=".8"/></svg>
<svg style="left:18.5px;top:7.0px" width="5.3" height="3.5" viewBox="0 0 6 4"><path d="M.5 .5l2.5 2.6 2.5-2.6" stroke="#ddd" stroke-width=".9" fill="none"/></svg>
<div class="a" style="left:29.5px;top:2.2px;width:67.0px;height:11.8px;background:#282828;border-radius:2.5px"></div>
<svg style="left:31.1px;top:3.2px" width="10" height="10" viewBox="0 0 10 10"><rect x="2.6" y="2.6" width="4.8" height="4.8" fill="#fff"/><path d="M.6 3V1.6a1 1 0 0 1 1-1H3M7 .6h1.4a1 1 0 0 1 1 1V3M9.4 7v1.4a1 1 0 0 1-1 1H7M3 9.4H1.6a1 1 0 0 1-1-1V7" stroke="#e0e0e0" stroke-width=".9" fill="none"/></svg>
<div class="t" style="left:44.5px;top:3.3px;color:#e6e6e6;">Object Mode</div>
<svg style="left:90.0px;top:6.8px" width="5.3" height="3.5" viewBox="0 0 6 4"><path d="M.5 .5l2.5 2.6 2.5-2.6" stroke="#ddd" stroke-width=".9" fill="none"/></svg>
<div class="t" style="left:105.5px;top:3.3px;color:#e6e6e6;">View</div>
<div class="t" style="left:131.3px;top:3.3px;color:#e6e6e6;">Select</div>
<div class="t" style="left:160.7px;top:3.3px;color:#e6e6e6;">Add</div>
<div class="t" style="left:183.9px;top:3.3px;color:#e6e6e6;">Object</div>
<div class="a" style="left:222.1px;top:2.2px;width:47.0px;height:11.8px;background:#282828;border-radius:2.5px"></div>
<svg style="left:224.0px;top:3.2px" width="10" height="10" viewBox="0 0 10 10"><path d="M2 .6v7.4h7.4" stroke="#ddd" stroke-width=".9" fill="none"/><path d="M2 8L7 3" stroke="#ddd" stroke-width=".9"/><circle cx="2" cy="1" r=".9" fill="#ddd"/><circle cx="9" cy="8" r=".9" fill="#ddd"/><circle cx="7" cy="3" r=".9" fill="#ddd"/></svg>
<div class="t" style="left:237.5px;top:3.3px;color:#e6e6e6;">Global</div>
<svg style="left:262.5px;top:6.8px" width="5.3" height="3.5" viewBox="0 0 6 4"><path d="M.5 .5l2.5 2.6 2.5-2.6" stroke="#ddd" stroke-width=".9" fill="none"/></svg>
<div class="a" style="left:274.1px;top:2.2px;width:18.6px;height:11.8px;background:#282828;border-radius:2.5px"></div>
<svg style="left:275.9px;top:3.2px" width="10" height="10" viewBox="0 0 10 10"><rect x=".8" y="3.6" width="5.6" height="3.4" rx="1.7" transform="rotate(-35 3.6 5.3)" fill="none" stroke="#ddd" stroke-width=".9"/><rect x="3.8" y="2.6" width="5.6" height="3.4" rx="1.7" transform="rotate(-35 6.6 4.3)" fill="none" stroke="#ddd" stroke-width=".9"/></svg>
<svg style="left:286.1px;top:6.8px" width="5.3" height="3.5" viewBox="0 0 6 4"><path d="M.5 .5l2.5 2.6 2.5-2.6" stroke="#ddd" stroke-width=".9" fill="none"/></svg>
<div class="a" style="left:297.1px;top:2.2px;width:11.6px;height:11.8px;background:#545454;border-radius:2.5px 0 0 2.5px"></div>
<svg style="left:298.1px;top:3.2px" width="10" height="10" viewBox="0 0 10 10"><path d="M2.2 8.6V4.2a2.9 2.9 0 0 1 5.8 0v2.2M4.2 6.6V4.4a.9.9 0 0 1 1.8 0v4.2" stroke="#999" stroke-width=".9" fill="none"/></svg>
<div class="a" style="left:309.1px;top:2.2px;width:19.0px;height:11.8px;background:#282828;border-radius:0 2.5px 2.5px 0"></div>
<div class="a" style="left:311.5px;top:4.2px;width:7.8px;height:7.8px;background:#f2f2f2;"></div>
<svg style="left:321.5px;top:6.8px" width="5.3" height="3.5" viewBox="0 0 6 4"><path d="M.5 .5l2.5 2.6 2.5-2.6" stroke="#ddd" stroke-width=".9" fill="none"/></svg>
<div class="a" style="left:332.9px;top:2.2px;width:12.0px;height:11.8px;background:#545454;border-radius:2.5px 0 0 2.5px"></div>
<svg style="left:333.9px;top:3.2px" width="10" height="10" viewBox="0 0 10 10"><circle cx="5" cy="5" r="3.6" fill="none" stroke="#ccc" stroke-width=".9"/><circle cx="5" cy="5" r="1.5" fill="#eee"/></svg>
<div class="a" style="left:345.3px;top:2.2px;width:20.0px;height:11.8px;background:#353535;border-radius:0 2.5px 2.5px 0"></div>
<svg style="left:346.5px;top:3.2px" width="10" height="10" viewBox="0 0 10 10"><path d="M.6 8.4C3.6 8.4 3.2 1.6 5 1.6S6.4 8.4 9.4 8.4" stroke="#5c5c5c" stroke-width=".9" fill="none"/></svg>
<svg style="left:357.5px;top:6.8px" width="5.3" height="3.5" viewBox="0 0 6 4"><path d="M.5 .5l2.5 2.6 2.5-2.6" stroke="#555" stroke-width=".9" fill="none"/></svg>
<div class="a" style="left:375.1px;top:2.2px;width:22.0px;height:11.8px;background:#282828;border-radius:2.5px"></div>
<svg style="left:376.5px;top:3.2px" width="11" height="10" viewBox="0 0 11 10"><path d="M1 3.8C3 .6 8 .6 10 3.8 8 7 3 7 1 3.8z" fill="#eee"/><circle cx="5.5" cy="3.8" r="1.5" fill="#282828"/><path d="M1.6 6l2 3.6 1-1.6 1.8-.2z" fill="#eee"/></svg>
<svg style="left:389.5px;top:6.8px" width="5.3" height="3.5" viewBox="0 0 6 4"><path d="M.5 .5l2.5 2.6 2.5-2.6" stroke="#ddd" stroke-width=".9" fill="none"/></svg>
<div class="a" style="left:399.1px;top:2.2px;width:12.0px;height:11.8px;background:#4772b3;border-radius:2.5px 0 0 2.5px"></div>
<svg style="left:400.1px;top:3.2px" width="10" height="10" viewBox="0 0 10 10"><path d="M1.4 8.8C2.4 4.4 5 2 9 1.2M1.4 8.8L6 4.6M3 2l5.6 6.4" stroke="#fff" stroke-width=".9" fill="none"/><path d="M9.4 .6L6.6 1.2l2 2z" fill="#fff"/></svg>
<div class="a" style="left:411.5px;top:2.2px;width:10.4px;height:11.8px;background:#282828;border-radius:0 2.5px 2.5px 0"></div>
<svg style="left:413.7px;top:6.8px" width="5.3" height="3.5" viewBox="0 0 6 4"><path d="M.5 .5l2.5 2.6 2.5-2.6" stroke="#ddd" stroke-width=".9" fill="none"/></svg>
<div class="a" style="left:427.3px;top:2.2px;width:12.0px;height:11.8px;background:#4772b3;border-radius:2.5px 0 0 2.5px"></div>
<svg style="left:428.3px;top:3.2px" width="10" height="10" viewBox="0 0 10 10"><circle cx="4" cy="5.8" r="3.2" fill="none" stroke="#fff" stroke-width="1"/><circle cx="6" cy="4" r="3.2" fill="#fff"/></svg>
<div class="a" style="left:439.7px;top:2.2px;width:10.4px;height:11.8px;background:#282828;border-radius:0 2.5px 2.5px 0"></div>
<svg style="left:441.9px;top:6.8px" width="5.3" height="3.5" viewBox="0 0 6 4"><path d="M.5 .5l2.5 2.6 2.5-2.6" stroke="#ddd" stroke-width=".9" fill="none"/></svg>
<div class="a" style="left:455.9px;top:2.2px;width:11.6px;height:11.8px;background:#545454;border-radius:2.5px"></div>
<svg style="left:456.7px;top:3.2px" width="10" height="10" viewBox="0 0 10 10"><rect x="3.2" y="1" width="5.8" height="5.8" rx="1" fill="none" stroke="#ddd" stroke-width=".9"/><rect x="1" y="3.2" width="5.8" height="5.8" rx="1" fill="#545454" stroke="#ddd" stroke-width=".9"/></svg>
<div class="a" style="left:471.5px;top:2.2px;width:12.0px;height:11.8px;background:#545454;border-radius:2.5px 0 0 2.5px"></div>
<svg style="left:472.9px;top:3.2px" width="10" height="10" viewBox="0 0 10 10"><circle cx="5" cy="5" r="4" fill="none" stroke="#ccc" stroke-width=".9"/><path d="M1 5h8M5 1v8M2 2.6c2 1 4 1 6 0M2 7.4c2-1 4-1 6 0" stroke="#ccc" stroke-width=".7" fill="none"/></svg>
<div class="a" style="left:436.5px;top:18.2px;width:40.4px;height:11.4px;background:#2d2d2d;border-radius:2.5px"></div>
<div class="t" style="left:441.9px;top:19.4px;color:#e6e6e6;">Options</div>
<svg style="left:469.1px;top:22.4px" width="5.3" height="3.5" viewBox="0 0 6 4"><path d="M.5 .5l2.5 2.6 2.5-2.6" stroke="#ddd" stroke-width=".9" fill="none"/></svg>
<svg style="left:478.1px;top:31.400000000000006px" width="4" height="6" viewBox="0 0 4 6"><path d="M3.4 .5L.8 3l2.6 2.5" stroke="#aaa" stroke-width=".8" fill="none"/></svg>
<div class="a" style="left:4.5px;top:17.2px;width:64.0px;height:13.0px;background:rgba(38,38,38,.85);border-radius:3px"></div>
<div class="a" style="left:5.3px;top:18.0px;width:11.4px;height:11.4px;background:#4772b3;border-radius:2px"></div>
<svg style="left:6.1px;top:18.7px" width="10" height="10" viewBox="0 0 10 10"><rect x="1" y="1" width="8" height="8" fill="none" stroke="#fff" stroke-width="1" stroke-dasharray="1.4 1"/></svg>
<svg style="left:17.9px;top:18.7px" width="10" height="10" viewBox="0 0 10 10"><rect x="3.2" y="1" width="6" height="6" fill="#9a9a9a"/><rect x=".8" y="3.2" width="6" height="6" fill="#e8e8e8"/></svg>
<svg style="left:29.7px;top:18.7px" width="10" height="10" viewBox="0 0 10 10"><rect x="1" y="1" width="8" height="8" fill="none" stroke="#aaa" stroke-width=".8" stroke-dasharray="1.2 1.2"/><path d="M4 1h5v5h-2.4V3.4H4z" fill="#e8e8e8"/></svg>
<svg style="left:41.5px;top:18.7px" width="10" height="10" viewBox="0 0 10 10"><rect x="1.2" y="1.2" width="7.6" height="7.6" fill="none" stroke="#e8e8e8" stroke-width="2"/><rect x="3.6" y="3.6" width="2.8" height="2.8" fill="#777"/></svg>
<svg style="left:53.3px;top:18.7px" width="10" height="10" viewBox="0 0 10 10"><rect x="1" y="1" width="8" height="8" fill="none" stroke="#aaa" stroke-width=".8" stroke-dasharray="1.2 1.2"/><rect x="3.2" y="3.2" width="3.6" height="3.6" fill="#e8e8e8"/></svg>
<div class="a" style="left:5.3px;top:37.0px;width:24.0px;height:21.2px;background:#4772b3;border-radius:3px 3px 0 0"></div>
<svg style="left:7.9px;top:38.2px" width="18.8" height="18.8" viewBox="0 0 16 16"><rect x="2" y="2" width="12" height="12" rx="1.5" fill="none" stroke="#f0b040" stroke-width="1.3" stroke-dasharray="2.2 1.6"/><path d="M6.4 4.6l5.4 3.6-2.6.6-1 2.6z" fill="#fff"/></svg>
<svg style="left:25.9px;top:54.8px" width="3" height="3" viewBox="0 0 3 3"><path d="M2.6 .2v2.4H.2z" fill="#aaa"/></svg>
<div class="a" style="left:5.3px;top:59.4px;width:24.0px;height:20.6px;background:rgba(38,38,38,.92);border-radius:0 0 3px 3px"></div>
<svg style="left:7.9px;top:60.3px" width="18.8" height="18.8" viewBox="0 0 16 16"><circle cx="8" cy="8" r="5.6" fill="none" stroke="#e04040" stroke-width="1.3"/><circle cx="8" cy="8" r="5.6" fill="none" stroke="#fff" stroke-width="1.3" stroke-dasharray="2.2 2.2"/><path d="M8 3.6v3M8 9.4v3M3.6 8h3M9.4 8h3" stroke="#ddd" stroke-width=".9"/></svg>
<div class="a" style="left:5.3px;top:84.6px;width:24.0px;height:21.0px;background:rgba(38,38,38,.92);border-radius:3px 3px 0 0"></div>
<svg style="left:7.9px;top:85.7px" width="18.8" height="18.8" viewBox="0 0 16 16"><path d="M8 2.4v11.2M2.4 8h11.2" stroke="#eee" stroke-width="1.1"/><path d="M8 .8l2 2.6H6zM8 15.2l2-2.6H6zM.8 8l2.6-2v4zM15.2 8l-2.6-2v4z" fill="#eee"/></svg>
<div class="a" style="left:5.3px;top:106.8px;width:24.0px;height:21.0px;background:rgba(38,38,38,.92);border-radius:0 0 0 0"></div>
<svg style="left:7.9px;top:107.9px" width="18.8" height="18.8" viewBox="0 0 16 16"><path d="M3 6.4A5.4 5.4 0 0 1 13 6.4M3 9.6A5.4 5.4 0 0 0 13 9.6" fill="none" stroke="#eee" stroke-width="1.1"/><circle cx="8" cy="8" r="1.8" fill="#eee"/><path d="M1.6 7.2l1.6 2.4 1.4-2.6zM14.4 8.8l-1.6-2.4-1.4 2.6z" fill="#eee"/></svg>
<div class="a" style="left:5.3px;top:129.0px;width:24.0px;height:21.0px;background:rgba(38,38,38,.92);border-radius:0 0 0 0"></div>
<svg style="left:7.9px;top:130.1px" width="18.8" height="18.8" viewBox="0 0 16 16"><rect x="2.4" y="7" width="6.6" height="6.6" fill="#eee"/><path d="M2.4 9.2h6.6M2.4 11.4h6.6M4.6 7v6.6M6.8 7v6.6" stroke="#2b2b2b" stroke-width=".5"/><path d="M5 2.6h8.4V11" fill="none" stroke="#ddd" stroke-width="1"/><path d="M9.4 6.6l3.2-3.2" stroke="#eee" stroke-width="1.2"/></svg>
<svg style="left:25.9px;top:146.6px" width="3" height="3" viewBox="0 0 3 3"><path d="M2.6 .2v2.4H.2z" fill="#aaa"/></svg>
<div class="a" style="left:5.3px;top:151.2px;width:24.0px;height:20.8px;background:rgba(38,38,38,.92);border-radius:0 0 3px 3px"></div>
<svg style="left:7.9px;top:152.2px" width="18.8" height="18.8" viewBox="0 0 16 16"><circle cx="8" cy="8" r="5.8" fill="none" stroke="#eee" stroke-width="1.1"/><rect x="5.4" y="5.4" width="5.2" height="5.2" fill="#eee"/><path d="M8 1l1.4 1.8H6.6zM8 15l1.4-1.8H6.6zM1 8l1.8-1.4v2.8zM15 8l-1.8-1.4v2.8z" fill="#eee" stroke="#2b2b2b" stroke-width=".4"/></svg>
<div class="a" style="left:5.3px;top:176.4px;width:24.0px;height:20.8px;background:rgba(38,38,38,.92);border-radius:3px 3px 0 0"></div>
<svg style="left:7.9px;top:177.4px" width="18.8" height="18.8" viewBox="0 0 16 16"><path d="M3.2 10.4l7.8-7.8 2 2-7.8 7.8-2.6.6z" fill="#eee"/><path d="M2 13.6c3 1.6 4.4-2.6 7-1.8 2 .6 2.4 2.8 5 2" fill="none" stroke="#7fd6a8" stroke-width="1"/></svg>
<svg style="left:25.9px;top:193.8px" width="3" height="3" viewBox="0 0 3 3"><path d="M2.6 .2v2.4H.2z" fill="#aaa"/></svg>
<div class="a" style="left:5.3px;top:198.4px;width:24.0px;height:20.6px;background:rgba(38,38,38,.92);border-radius:0 0 3px 3px"></div>
<svg style="left:7.9px;top:199.3px" width="18.8" height="18.8" viewBox="0 0 16 16"><path d="M3.4 1.6h2.2v10.6h9v2.2H3.4z" fill="#eee"/><path d="M5.6 12.2V5.6a6.6 6.6 0 0 1 6.6 6.6z" fill="#7fd6a8"/></svg>
<div class="a" style="left:5.3px;top:223.6px;width:24.0px;height:20.4px;background:rgba(38,38,38,.92);border-radius:3px 3px 3px 3px"></div>
<svg style="left:7.9px;top:224.4px" width="18.8" height="18.8" viewBox="0 0 16 16"><path d="M4.4 6.4h8.2v8M4.4 6.4v8M4.4 6.4l2.4-2.4h8.200v8l-2.400 2.400" fill="none" stroke="#7fd6a8" stroke-width="1"/><path d="M2.6 .4l.7 1.9 1.900.7-1.900.7-.7 1.900-.7-1.900-1.900-.7 1.900-.7z" fill="#7fd6a8"/></svg>
<div class="t" style="left:40.1px;top:37.7px;color:#f4f4f4;text-shadow:0 .5px 1px rgba(0,0,0,.9)">User Perspective</div>
<div class="t" style="left:40.1px;top:48.6px;color:#f4f4f4;text-shadow:0 .5px 1px rgba(0,0,0,.9)">(1) LOD3 | Roof01</div>
<svg style="left:0;top:0" width="481.5" height="237.6" viewBox="343.5 37 481.5 237.6"><circle cx="782.8" cy="88.9" r="4.3" fill="#8a3a48" fill-opacity=".55" stroke="#c0405a" stroke-width=".9"/><circle cx="775.8" cy="106.6" r="4.6" fill="#5f7f1c" fill-opacity=".8" stroke="#86c21c" stroke-width="1"/><circle cx="793.4" cy="115.5" r="4.3" fill="#2b4c7a" fill-opacity=".7" stroke="#2f74c8" stroke-width=".9"/><path d="M793 99.7L793 84.5" stroke="#2e8cf2" stroke-width="1.4"/><path d="M793 99.7L810.5 93.8" stroke="#7cb518" stroke-width="1.4"/><path d="M793 99.7L803 110.8" stroke="#f23a55" stroke-width="1.4"/><circle cx="793" cy="84.5" r="5.3" fill="#2e8cf2"/><circle cx="810.5" cy="93.8" r="5.3" fill="#7cb518"/><circle cx="803" cy="110.8" r="5.3" fill="#f23a55"/><g font-family="Liberation Sans" font-size="7" font-weight="bold" fill="#111" text-anchor="middle"><text x="793" y="87">Z</text><text x="810.5" y="96.3">Y</text><text x="803" y="113.3">X</text></g><g fill="#262626" fill-opacity=".85"><circle cx="811" cy="135" r="6.6"/><circle cx="811" cy="153.6" r="6.6"/><circle cx="811" cy="172.1" r="6.6"/><circle cx="811" cy="191" r="6.6"/></g><g fill="none" stroke="#eee" stroke-width="1.1"><circle cx="812.4" cy="133.6" r="3.2"/><path d="M810 136.200L806.800 139.400"/><path d="M812.400 132.200v2.800M811 133.600h2.800" stroke-width=".8"/></g><path d="M807.600 153.500c0-1.500 1-1.600 1.300-.3v-3.400c0-1 1.200-1 1.200 0v-1c0-1 1.300-1 1.300 0v.6c0-1 1.300-1 1.300 0v1c0-.9 1.200-.9 1.200 0v5c0 2-1.200 3-3 3s-3.300-1.600-3.300-4.900z" fill="#eee"/><g fill="none" stroke="#eee" stroke-width=".9"><circle cx="809.200" cy="169.800" r="1.900"/><circle cx="813.200" cy="169.600" r="2.300"/><path d="M807.600 173.200h5.600v2.800h-5.600zM813.200 174.600l2.400-1.200v2.400z" fill="#eee"/></g><path d="M808.200 187.400h5.600l2 7.400h-9.600z" fill="#eee"/><path d="M807.400 190.100h7.200M806.700 192.500h8.600M809.800 187.400l-.8 7.400M812.200 187.400l.8 7.400" stroke="#262626" stroke-width=".6"/></svg>
</div>
<div class="area" id="ol" style="left:826.5px;top:37px;width:171.5px;height:198.800px;background:#282828">
<div class="a" style="left:0.0px;top:29.4px;width:172.0px;height:12.6px;background:#2b2b2b;"></div>
<div class="a" style="left:0.0px;top:54.6px;width:172.0px;height:12.6px;background:#2b2b2b;"></div>
<div class="a" style="left:0.0px;top:79.8px;width:172.0px;height:12.6px;background:#2b2b2b;"></div>
<div class="a" style="left:0.0px;top:105.0px;width:172.0px;height:12.6px;background:#2b2b2b;"></div>
<div class="a" style="left:0.0px;top:130.2px;width:172.0px;height:12.6px;background:#2b2b2b;"></div>
<div class="a" style="left:0.0px;top:155.4px;width:172.0px;height:12.6px;background:#2b2b2b;"></div>
<div class="a" style="left:0.0px;top:180.6px;width:172.0px;height:12.6px;background:#2b2b2b;"></div>
<div class="a" style="left:0.0px;top:205.8px;width:172.0px;height:12.6px;background:#2b2b2b;"></div>
<div class="a" style="left:0.0px;top:0.0px;width:172.0px;height:17.0px;background:#303030;"></div>
<div class="a" style="left:5.5px;top:1.8px;width:19.4px;height:12.0px;background:#282828;border-radius:2.500px"></div>
<svg style="left:7.1px;top:2.8px" width="10" height="10" viewBox="0 0 10 10"><rect x=".6" y=".8" width="3" height="2.600" fill="#e6e6e6"/><path d="M2.100 3.400v4.600h2.400M2.100 5.200h2.400" stroke="#bbb" stroke-width=".8" fill="none"/><rect x="5" y="4.200" width="4.600" height="1.800" fill="#e6e6e6"/><rect x="5" y="7.200" width="4.600" height="1.800" fill="#e6e6e6"/><rect x="5" y="1.200" width="3" height="1.600" fill="#999"/></svg>
<svg style="left:18.3px;top:6.4px" width="5.3" height="3.5" viewBox="0 0 6 4"><path d="M.5 .5l2.5 2.6 2.5-2.6" stroke="#ccc" stroke-width=".9" fill="none"/></svg>
<div class="a" style="left:28.1px;top:1.8px;width:20.4px;height:12.0px;background:#282828;border-radius:2.500px"></div>
<svg style="left:30.5px;top:2.8px" width="10" height="10" viewBox="0 0 10 10"><rect x="3.400" y=".8" width="6" height="6" rx="1.200" fill="#8a8a8a"/><rect x=".8" y="3" width="6.400" height="6.400" rx="1.200" fill="#e0e0e0"/><path d="M4 4.600l2 3.200H2z" fill="#2b2b2b"/></svg>
<svg style="left:41.5px;top:6.4px" width="5.3" height="3.5" viewBox="0 0 6 4"><path d="M.5 .5l2.5 2.6 2.5-2.6" stroke="#ccc" stroke-width=".9" fill="none"/></svg>
<div class="a" style="left:58.9px;top:1.8px;width:73.6px;height:12.0px;background:#1d1d1d;border-radius:2.500px;border:.6px solid #3c3c3c"></div>
<svg style="left:61.1px;top:2.9px" width="10" height="10" viewBox="0 0 10 10"><circle cx="6" cy="3.800" r="2.900" fill="none" stroke="#ddd" stroke-width="1"/><path d="M3.900 5.900L.8 9" stroke="#ddd" stroke-width="1.100"/></svg>
<div class="t" style="left:74.5px;top:3.4px;color:#6e6e6e;">Search</div>
<div class="a" style="left:142.9px;top:1.8px;width:21.0px;height:12.0px;background:#282828;border-radius:2.500px"></div>
<svg style="left:144.5px;top:2.9px" width="10" height="10" viewBox="0 0 10 10"><path d="M.8 1h8.400L6 5v3.800l-2-1.200V5z" fill="none" stroke="#e6e6e6" stroke-width=".9" stroke-linejoin="round"/></svg>
<svg style="left:156.5px;top:6.4px" width="5.3" height="3.5" viewBox="0 0 6 4"><path d="M.5 .5l2.5 2.6 2.5-2.6" stroke="#ccc" stroke-width=".9" fill="none"/></svg>
<div class="a" style="left:167.3px;top:2.8px;width:5.0px;height:10.4px;background:#555;border-radius:2.500px 0 0 2.500px"></div>
<svg style="left:14.3px;top:18.0px" width="10" height="10" viewBox="0 0 10 10"><path d="M.6 .8h8.800v2.400H.6z" fill="#e6e6e6"/><path d="M1.300 3.800h7.400v4.600a.8.800 0 0 1-.8.800H2.100a.8.800 0 0 1-.8-.8z" fill="#e6e6e6"/><rect x="3.600" y="4.800" width="2.800" height="1.300" rx=".5" fill="#282828"/></svg>
<div class="t" style="left:27.9px;top:18.4px;color:#e0e0e0;">Scene Collection</div>
<svg style="left:16.5px;top:33.6px" width="5.3" height="3.5" viewBox="0 0 6 4"><path d="M.5 .5l2.5 2.6 2.5-2.6" stroke="#ccc" stroke-width=".9" fill="none"/></svg>
<svg style="left:26.9px;top:30.6px" width="10" height="10" viewBox="0 0 10 10"><path d="M.6 .8h8.800v2.400H.6z" fill="#4cc3ff"/><path d="M1.300 3.800h7.400v4.600a.8.800 0 0 1-.8.800H2.100a.8.800 0 0 1-.8-.8z" fill="#4cc3ff"/><rect x="3.600" y="4.800" width="2.800" height="1.300" rx=".5" fill="#282828"/></svg>
<div class="t" style="left:40.5px;top:31.0px;color:#e0e0e0;">PLATEAU</div>
<svg style="left:131.1px;top:31.1px" width="9" height="9" viewBox="0 0 9 9"><rect x=".8" y=".8" width="7.400" height="7.400" rx="1" fill="#e6e6e6"/><path d="M2.400 4.600l1.600 1.600 3-3.400" stroke="#282828" stroke-width="1.100" fill="none"/></svg>
<svg style="left:143.1px;top:30.6px" width="10" height="10" viewBox="0 0 10 10"><path d="M.6 5C2.400 1.800 7.600 1.800 9.400 5 7.600 8.200 2.400 8.200.6 5z" fill="none" stroke="#e6e6e6" stroke-width=".9"/><circle cx="5" cy="5" r="1.700" fill="#e6e6e6"/></svg>
<svg style="left:155.9px;top:30.6px" width="10" height="10" viewBox="0 0 10 10"><path d="M.8 3.200a.8.800 0 0 1 .8-.8h1.200l.8-1.200h2.800l.8 1.200h1.200a.8.800 0 0 1 .8.800v4.600a.8.800 0 0 1-.8.800H1.600a.8.800 0 0 1-.8-.8z" fill="#e6e6e6"/><circle cx="5" cy="5.400" r="1.900" fill="#282828"/><circle cx="5" cy="5.400" r="1" fill="#e6e6e6"/></svg>
<div class="a" style="left:18.3px;top:44.2px;width:0.8px;height:20.0px;background:#3d7fa8;"></div>
<svg style="left:29.1px;top:46.2px" width="5.3" height="3.5" viewBox="0 0 6 4"><path d="M.5 .5l2.5 2.6 2.5-2.6" stroke="#ccc" stroke-width=".9" fill="none"/></svg>
<div class="a" style="left:37.7px;top:42.2px;width:12.4px;height:12.0px;background:#555;border-radius:3px"></div>
<svg style="left:38.9px;top:43.2px" width="10" height="10" viewBox="0 0 10 10"><path d="M.6 .8h8.800v2.400H.6z" fill="#4cc3ff"/><path d="M1.300 3.800h7.400v4.600a.8.800 0 0 1-.8.800H2.100a.8.800 0 0 1-.8-.8z" fill="#4cc3ff"/><rect x="3.600" y="4.800" width="2.800" height="1.300" rx=".5" fill="#555"/></svg>
<div class="t" style="left:53.5px;top:43.6px;color:#e0e0e0;">LOD3</div>
<svg style="left:131.1px;top:43.7px" width="9" height="9" viewBox="0 0 9 9"><rect x=".8" y=".8" width="7.400" height="7.400" rx="1" fill="#e6e6e6"/><path d="M2.400 4.600l1.600 1.600 3-3.400" stroke="#282828" stroke-width="1.100" fill="none"/></svg>
<svg style="left:143.1px;top:43.2px" width="10" height="10" viewBox="0 0 10 10"><path d="M.6 5C2.400 1.800 7.600 1.800 9.400 5 7.600 8.200 2.400 8.200.6 5z" fill="none" stroke="#e6e6e6" stroke-width=".9"/><circle cx="5" cy="5" r="1.700" fill="#e6e6e6"/></svg>
<svg style="left:155.9px;top:43.2px" width="10" height="10" viewBox="0 0 10 10"><path d="M.8 3.200a.8.800 0 0 1 .8-.8h1.200l.8-1.200h2.800l.8 1.200h1.200a.8.800 0 0 1 .8.800v4.600a.8.800 0 0 1-.8.800H1.600a.8.800 0 0 1-.8-.8z" fill="#e6e6e6"/><circle cx="5" cy="5.400" r="1.900" fill="#282828"/><circle cx="5" cy="5.400" r="1" fill="#e6e6e6"/></svg>
<div class="a" style="left:30.9px;top:56.3px;width:0.8px;height:8.5px;background:#3d7fa8;"></div>
<svg style="left:43.1px;top:57.8px" width="4" height="6" viewBox="0 0 4 6"><path d="M.5 .5l2.600 2.500-2.600 2.500" stroke="#ccc" stroke-width=".9" fill="none"/></svg>
<svg style="left:51.5px;top:55.8px" width="10" height="10" viewBox="0 0 10 10"><path d="M1.400 1.600h7.200L5 8.800z" fill="none" stroke="#e8883a" stroke-width="1.100" stroke-linejoin="round"/></svg>
<div class="t" style="left:65.89999999999998px;top:56.2px;width:70px;overflow:hidden;color:#e0e0e0;-webkit-mask-image:linear-gradient(90deg,#000 90%,transparent)">52354601_bldg_6472</div>
<svg style="left:143.1px;top:55.8px" width="10" height="10" viewBox="0 0 10 10"><path d="M.6 5C2.400 1.800 7.600 1.800 9.400 5 7.600 8.200 2.400 8.200.6 5z" fill="none" stroke="#e6e6e6" stroke-width=".9"/><circle cx="5" cy="5" r="1.700" fill="#e6e6e6"/></svg>
<svg style="left:155.9px;top:55.8px" width="10" height="10" viewBox="0 0 10 10"><path d="M.8 3.200a.8.800 0 0 1 .8-.8h1.200l.8-1.200h2.800l.8 1.200h1.200a.8.800 0 0 1 .8.800v4.600a.8.800 0 0 1-.8.800H1.600a.8.800 0 0 1-.8-.8z" fill="#e6e6e6"/><circle cx="5" cy="5.400" r="1.900" fill="#282828"/><circle cx="5" cy="5.400" r="1" fill="#e6e6e6"/></svg>
<svg style="left:16.5px;top:71.4px" width="5.3" height="3.5" viewBox="0 0 6 4"><path d="M.5 .5l2.5 2.6 2.5-2.6" stroke="#ccc" stroke-width=".9" fill="none"/></svg>
<svg style="left:26.9px;top:68.4px" width="10" height="10" viewBox="0 0 10 10"><path d="M.6 .8h8.800v2.400H.6z" fill="#e668cf"/><path d="M1.300 3.800h7.400v4.600a.8.800 0 0 1-.8.800H2.100a.8.800 0 0 1-.8-.8z" fill="#e668cf"/><rect x="3.600" y="4.800" width="2.800" height="1.300" rx=".5" fill="#282828"/></svg>
<div class="t" style="left:40.5px;top:68.8px;color:#e0e0e0;">Kawara Model</div>
<svg style="left:131.1px;top:68.9px" width="9" height="9" viewBox="0 0 9 9"><rect x=".8" y=".8" width="7.400" height="7.400" rx="1" fill="#e6e6e6"/><path d="M2.400 4.600l1.600 1.600 3-3.400" stroke="#282828" stroke-width="1.100" fill="none"/></svg>
<svg style="left:143.1px;top:68.4px" width="10" height="10" viewBox="0 0 10 10"><path d="M.6 5C2.400 1.800 7.600 1.800 9.400 5 7.600 8.200 2.400 8.200.6 5z" fill="none" stroke="#e6e6e6" stroke-width=".9"/><circle cx="5" cy="5" r="1.700" fill="#e6e6e6"/></svg>
<svg style="left:155.9px;top:68.4px" width="10" height="10" viewBox="0 0 10 10"><path d="M.8 3.200a.8.800 0 0 1 .8-.8h1.200l.8-1.200h2.800l.8 1.200h1.200a.8.800 0 0 1 .8.800v4.600a.8.800 0 0 1-.8.800H1.600a.8.800 0 0 1-.8-.8z" fill="#e6e6e6"/><circle cx="5" cy="5.400" r="1.900" fill="#282828"/><circle cx="5" cy="5.400" r="1" fill="#e6e6e6"/></svg>
<div class="a" style="left:18.3px;top:81.5px;width:0.8px;height:8.5px;background:#9a5a8f;"></div>
<svg style="left:30.1px;top:83.0px" width="4" height="6" viewBox="0 0 4 6"><path d="M.5 .5l2.600 2.500-2.600 2.500" stroke="#ccc" stroke-width=".9" fill="none"/></svg>
<svg style="left:39.3px;top:81.0px" width="10" height="10" viewBox="0 0 10 10"><path d="M1.400 1.600h7.200L5 8.800z" fill="none" stroke="#e8883a" stroke-width="1.100" stroke-linejoin="round"/></svg>
<div class="t" style="left:53.3px;top:81.4px;color:#e0e0e0;">Kawara.005</div>
<svg style="left:106.1px;top:81.0px" width="10" height="10" viewBox="0 0 10 10"><path d="M8.800 2.200a2.400 2.400 0 0 1-3.200 2.600L2.400 8.600a1 1 0 0 1-1.500-1.400l3.500-3.400A2.400 2.400 0 0 1 7.200.8L5.800 2.400l.4 1.200 1.200.2z" fill="none" stroke="#4d7fd0" stroke-width=".9" stroke-linejoin="round"/></svg>
<svg style="left:118.9px;top:81.0px" width="10" height="10" viewBox="0 0 10 10"><path d="M1.600 1.800h6.800L5 8.600z" fill="none" stroke="#00b894" stroke-width=".9"/><circle cx="1.600" cy="1.800" r="1.200" fill="#00b894"/><circle cx="8.400" cy="1.800" r="1.200" fill="#00b894"/><circle cx="5" cy="8.400" r="1.200" fill="#00b894"/></svg>
<svg style="left:143.1px;top:81.0px" width="10" height="10" viewBox="0 0 10 10"><path d="M.6 5C2.400 1.800 7.600 1.800 9.400 5 7.600 8.200 2.400 8.200.6 5z" fill="none" stroke="#e6e6e6" stroke-width=".9"/><circle cx="5" cy="5" r="1.700" fill="#e6e6e6"/></svg>
<svg style="left:155.9px;top:81.0px" width="10" height="10" viewBox="0 0 10 10"><path d="M.8 3.200a.8.800 0 0 1 .8-.8h1.200l.8-1.200h2.800l.8 1.200h1.200a.8.800 0 0 1 .8.800v4.600a.8.800 0 0 1-.8.800H1.600a.8.800 0 0 1-.8-.8z" fill="#e6e6e6"/><circle cx="5" cy="5.400" r="1.900" fill="#282828"/><circle cx="5" cy="5.400" r="1" fill="#e6e6e6"/></svg>
<svg style="left:16.5px;top:96.6px" width="5.3" height="3.5" viewBox="0 0 6 4"><path d="M.5 .5l2.5 2.6 2.5-2.6" stroke="#ccc" stroke-width=".9" fill="none"/></svg>
<svg style="left:26.9px;top:93.6px" width="10" height="10" viewBox="0 0 10 10"><path d="M.6 .8h8.800v2.400H.6z" fill="#f2564f"/><path d="M1.300 3.800h7.400v4.600a.8.800 0 0 1-.8.800H2.100a.8.800 0 0 1-.8-.8z" fill="#f2564f"/><rect x="3.600" y="4.800" width="2.800" height="1.300" rx=".5" fill="#282828"/></svg>
<div class="t" style="left:40.5px;top:94.0px;color:#e0e0e0;">Roof GeoNodes</div>
<svg style="left:131.1px;top:94.1px" width="9" height="9" viewBox="0 0 9 9"><rect x=".8" y=".8" width="7.400" height="7.400" rx="1" fill="#e6e6e6"/><path d="M2.400 4.600l1.600 1.600 3-3.400" stroke="#282828" stroke-width="1.100" fill="none"/></svg>
<svg style="left:143.1px;top:93.6px" width="10" height="10" viewBox="0 0 10 10"><path d="M.6 5C2.400 1.800 7.600 1.800 9.400 5 7.600 8.200 2.400 8.200.6 5z" fill="none" stroke="#e6e6e6" stroke-width=".9"/><circle cx="5" cy="5" r="1.700" fill="#e6e6e6"/></svg>
<svg style="left:155.9px;top:93.6px" width="10" height="10" viewBox="0 0 10 10"><path d="M.8 3.200a.8.800 0 0 1 .8-.8h1.200l.8-1.200h2.800l.8 1.200h1.200a.8.800 0 0 1 .8.800v4.600a.8.800 0 0 1-.8.800H1.600a.8.800 0 0 1-.8-.8z" fill="#e6e6e6"/><circle cx="5" cy="5.400" r="1.900" fill="#282828"/><circle cx="5" cy="5.400" r="1" fill="#e6e6e6"/></svg>
<div class="a" style="left:18.3px;top:106.7px;width:0.8px;height:8.5px;background:#a8504c;"></div>
<svg style="left:30.1px;top:108.2px" width="4" height="6" viewBox="0 0 4 6"><path d="M.5 .5l2.600 2.500-2.600 2.500" stroke="#ccc" stroke-width=".9" fill="none"/></svg>
<div class="a" style="left:37.7px;top:105.2px;width:12.4px;height:12.0px;background:#555;border-radius:3px"></div>
<svg style="left:38.9px;top:106.2px" width="10" height="10" viewBox="0 0 10 10"><path d="M1.400 1.600h7.200L5 8.800z" fill="none" stroke="#e8883a" stroke-width="1.100" stroke-linejoin="round"/></svg>
<div class="t" style="left:53.3px;top:106.6px;color:#e0e0e0;">Roof01</div>
<svg style="left:91.5px;top:106.2px" width="10" height="10" viewBox="0 0 10 10"><path d="M8.800 2.200a2.400 2.400 0 0 1-3.200 2.600L2.400 8.600a1 1 0 0 1-1.500-1.400l3.500-3.400A2.400 2.400 0 0 1 7.200.8L5.800 2.400l.4 1.200 1.200.2z" fill="none" stroke="#4d7fd0" stroke-width=".9" stroke-linejoin="round"/></svg>
<svg style="left:104.3px;top:106.2px" width="10" height="10" viewBox="0 0 10 10"><path d="M1.600 1.800h6.800L5 8.600z" fill="none" stroke="#00b894" stroke-width=".9"/><circle cx="1.600" cy="1.800" r="1.200" fill="#00b894"/><circle cx="8.400" cy="1.800" r="1.200" fill="#00b894"/><circle cx="5" cy="8.400" r="1.200" fill="#00b894"/></svg>
<svg style="left:143.1px;top:106.2px" width="10" height="10" viewBox="0 0 10 10"><path d="M.6 5C2.400 1.800 7.600 1.800 9.400 5 7.600 8.200 2.400 8.200.6 5z" fill="none" stroke="#e6e6e6" stroke-width=".9"/><circle cx="5" cy="5" r="1.700" fill="#e6e6e6"/></svg>
<svg style="left:155.9px;top:106.2px" width="10" height="10" viewBox="0 0 10 10"><path d="M.8 3.200a.8.800 0 0 1 .8-.8h1.200l.8-1.200h2.800l.8 1.200h1.200a.8.800 0 0 1 .8.800v4.600a.8.800 0 0 1-.8.800H1.600a.8.800 0 0 1-.8-.8z" fill="#e6e6e6"/><circle cx="5" cy="5.400" r="1.900" fill="#282828"/><circle cx="5" cy="5.400" r="1" fill="#e6e6e6"/></svg>
<div class="a" style="left:5.5px;top:195.8px;width:114.0px;height:2.0px;background:#4a4a4a;border-radius:1px"></div>
</div>
<div class="area" id="pr" style="left:826.5px;top:238px;width:171.5px;height:499.500px;background:#303030">
<div class="a" style="left:6.3px;top:1.7px;width:18.4px;height:11.4px;background:#282828;border-radius:2.500px"></div>
<svg style="left:7.1px;top:2.4px" width="11" height="10" viewBox="0 0 11 10"><rect x=".6" y=".6" width="9.600" height="3.800" rx="1.900" fill="#e8e8e8"/><rect x=".6" y="5.600" width="9.600" height="3.800" rx="1.900" fill="#e8e8e8"/><circle cx="7.900" cy="2.500" r="1.100" fill="#303030"/><circle cx="2.900" cy="7.500" r="1.100" fill="#303030"/></svg>
<svg style="left:19.1px;top:6.0px" width="5.3" height="3.5" viewBox="0 0 6 4"><path d="M.5 .5l2.5 2.6 2.5-2.6" stroke="#ccc" stroke-width=".9" fill="none"/></svg>
<div class="a" style="left:47.1px;top:1.6px;width:73.4px;height:11.6px;background:#1d1d1d;border-radius:2.500px;border:.6px solid #3c3c3c"></div>
<svg style="left:49.1px;top:2.5px" width="10" height="10" viewBox="0 0 10 10"><circle cx="6" cy="3.800" r="2.900" fill="none" stroke="#ddd" stroke-width="1"/><path d="M3.900 5.900L.8 9" stroke="#ddd" stroke-width="1.100"/></svg>
<div class="t" style="left:62.7px;top:2.9px;color:#6e6e6e;">Search</div>
<div class="a" style="left:156.0px;top:1.6px;width:11.4px;height:11.6px;background:#282828;border-radius:2.500px"></div>
<svg style="left:158.7px;top:6.0px" width="5.3" height="3.5" viewBox="0 0 6 4"><path d="M.5 .5l2.5 2.6 2.5-2.6" stroke="#ccc" stroke-width=".9" fill="none"/></svg>
<div class="a" style="left:0.0px;top:15.6px;width:17.7px;height:484.0px;background:#1d1d1d;"></div>
<div class="a" style="left:0.0px;top:15.6px;width:17.7px;height:22.6px;background:#2a2a2a;border-radius:0 0 3px 0"></div>
<div class="a" style="left:1.5px;top:96.6px;width:16.2px;height:16.4px;background:#303030;border-radius:3px 0 0 3px"></div>
<svg style="left:5.1px;top:24.6px" width="10" height="10" viewBox="0 0 10 10"><path d="M2.400 1v3.200M2.400 6v3.400" stroke="#e6e6e6" stroke-width="1.500"/><circle cx="2.400" cy="8.200" r="1.200" fill="#e6e6e6"/><path d="M5.600 1.200c0 2.400.8 2.800 1.600 3.200v5M8.800 1.200c0 2.400-.8 2.800-1.600 3.200" stroke="#e6e6e6" stroke-width="1.100" fill="none"/></svg>
<svg style="left:5.1px;top:47.0px" width="10" height="10" viewBox="0 0 10 10"><rect x=".8" y="2.600" width="8.400" height="6.400" rx="1" fill="#e0e0e0"/><rect x="2.400" y="4.200" width="5.200" height="3.400" fill="#1d1d1d"/><path d="M6 .8h2v2H6z" fill="#e0e0e0"/></svg>
<svg style="left:5.1px;top:64.9px" width="10" height="10" viewBox="0 0 10 10"><rect x=".8" y="1" width="8.400" height="3.600" rx="1" fill="#e0e0e0"/><rect x="2" y="4.600" width="6" height="4.600" fill="none" stroke="#e0e0e0" stroke-width=".9"/><path d="M3.400 6.600h3.200" stroke="#e0e0e0" stroke-width=".9"/></svg>
<svg style="left:5.1px;top:82.4px" width="10" height="10" viewBox="0 0 10 10"><rect x="3.200" y=".8" width="6" height="6" rx="1.200" fill="#777"/><rect x=".8" y="3" width="6.400" height="6.400" rx="1.200" fill="#c8c8c8"/><path d="M4 4.600l2 3.200H2z" fill="#1d1d1d"/></svg>
<svg style="left:5.1px;top:99.9px" width="10" height="10" viewBox="0 0 10 10"><path d="M3.200 1L5.400 7.200H1z" fill="#e6e6e6"/><circle cx="6.600" cy="6.600" r="2.100" fill="none" stroke="#e6e6e6" stroke-width="1"/><circle cx="7.600" cy="1.900" r="1" fill="#e6e6e6"/></svg>
<svg style="left:5.1px;top:117.5px" width="10" height="10" viewBox="0 0 10 10"><circle cx="5" cy="5" r="4.100" fill="none" stroke="#e0525f" stroke-width=".9"/><path d="M2 2.600c1.400-.4 2.400.4 2 1.400s-1.600.6-1.400 2 1.400 1.200 1.600 2.600M6.200 1.200c-.4 1 .6 1.400 1.600 1.600M6.400 5.200c1-.4 2 .2 2.400.8-.4 1.200-1 1.800-2 2.400-.6-.8-1-2.400-.4-3.200z" fill="#e0525f" stroke="#e0525f" stroke-width=".5"/></svg>
<svg style="left:5.1px;top:140.5px" width="10" height="10" viewBox="0 0 10 10"><path d="M.8 1h8.400v2.200H.8z" fill="none" stroke="#e6e6e6" stroke-width=".9"/><path d="M1.600 3.400h6.800v5.400H1.600z" fill="none" stroke="#e6e6e6" stroke-width=".9"/><rect x="3.600" y="5" width="2.800" height="1.600" fill="#e6e6e6"/></svg>
<svg style="left:5.1px;top:163.2px" width="10" height="10" viewBox="0 0 10 10"><rect x="2.600" y="2.600" width="4.800" height="4.800" fill="#e8883a"/><path d="M.6 3V1.600a1 1 0 0 1 1-1H3M7 .6h1.400a1 1 0 0 1 1 1V3M9.400 7v1.400a1 1 0 0 1-1 1H7M3 9.400H1.600a1 1 0 0 1-1-1V7" stroke="#e8883a" stroke-width=".9" fill="none"/></svg>
<svg style="left:24.5px;top:22.0px" width="10" height="10" viewBox="0 0 10 10"><path d="M3.200 1L5.400 7.200H1z" fill="#e6e6e6"/><circle cx="6.600" cy="6.600" r="2.100" fill="none" stroke="#e6e6e6" stroke-width="1"/><circle cx="7.600" cy="1.900" r="1" fill="#e6e6e6"/></svg>
<div class="t" style="left:39.3px;top:22.6px;color:#e8e8e8;">Scene</div>
<svg style="left:157.1px;top:22.0px" width="10" height="10" viewBox="0 0 10 10"><path d="M5.600 1.200l3.200 3.200-1 .2-1.600 1.600-.1 1.900-1.500-1.500L1.200 9.400l2.800-3.400-1.500-1.500 1.900-.1 1.600-1.600z" fill="none" stroke="#c8c8c8" stroke-width=".8" stroke-linejoin="round"/></svg>
<div class="a" style="left:22.7px;top:39.2px;width:144.7px;height:69.8px;background:#3d3d3d;border-radius:3px"></div>
<svg style="left:28.7px;top:46.4px" width="5.3" height="3.5" viewBox="0 0 6 4"><path d="M.5 .5l2.5 2.6 2.5-2.6" stroke="#ccc" stroke-width=".9" fill="none"/></svg>
<div class="t" style="left:36.7px;top:43.6px;color:#e8e8e8;">Scene</div>
<svg style="left:156.0px;top:45.5px" width="8" height="5" viewBox="0 0 8 5"><g fill="#4d4d4d"><circle cx="1" cy="1" r=".6"/><circle cx="3" cy="1" r=".6"/><circle cx="5" cy="1" r=".6"/><circle cx="7" cy="1" r=".6"/><circle cx="1" cy="3.600" r=".6"/><circle cx="3" cy="3.600" r=".6"/><circle cx="5" cy="3.600" r=".6"/><circle cx="7" cy="3.600" r=".6"/></g></svg>
<div class="a" style="left:85.5px;top:61.1px;width:75.8px;height:11.0px;background:#1d1d1d;border-radius:2.500px"></div>
<div class="t r" style="right:92.4px;top:62.1px;color:#e6e6e6;">Camera</div>
<svg style="left:87.7px;top:61.6px" width="10" height="10" viewBox="0 0 10 10"><rect x="2.600" y="2.600" width="4.800" height="4.800" fill="#fff"/><path d="M.6 3V1.600a1 1 0 0 1 1-1H3M7 .6h1.400a1 1 0 0 1 1 1V3M9.400 7v1.400a1 1 0 0 1-1 1H7M3 9.400H1.600a1 1 0 0 1-1-1V7" stroke="#e0e0e0" stroke-width=".9" fill="none"/></svg>
<svg style="left:150.3px;top:61.6px" width="10" height="10" viewBox="0 0 10 10"><path d="M1 9l.6-2.200 4-4 1.600 1.600-4 4z" fill="none" stroke="#ddd" stroke-width=".8"/><path d="M5.400 2.200l1-1c.8-.8 2.800 1.200 2 2l-1 1z" fill="#ddd"/></svg>
<div class="t" style="left:100.9px;top:62.1px;color:#6a6a6a;">Object</div>
<div class="a" style="left:85.5px;top:76.9px;width:75.8px;height:11.0px;background:#1d1d1d;border-radius:2.500px"></div>
<div class="t r" style="right:92.4px;top:77.9px;color:#e6e6e6;">Background ...</div>
<svg style="left:87.7px;top:77.4px" width="10" height="10" viewBox="0 0 10 10"><path d="M3.200 1L5.400 7.200H1z" fill="#e6e6e6"/><circle cx="6.600" cy="6.600" r="2.100" fill="none" stroke="#e6e6e6" stroke-width="1"/><circle cx="7.600" cy="1.900" r="1" fill="#e6e6e6"/></svg>
<div class="t" style="left:100.9px;top:77.9px;color:#6a6a6a;">Scene</div>
<div class="a" style="left:85.5px;top:92.6px;width:75.8px;height:11.0px;background:#1d1d1d;border-radius:2.500px"></div>
<div class="t r" style="right:92.4px;top:93.6px;color:#e6e6e6;">Active Clip</div>
<svg style="left:87.7px;top:93.1px" width="10" height="10" viewBox="0 0 10 10"><path d="M1 4h8v5H1z" fill="#e6e6e6"/><path d="M1 3.200L8.600 1l.4 1.400L1.400 4.600z" fill="#e6e6e6"/><path d="M3 2.600l1 1.600M5.400 2l1 1.600" stroke="#1d1d1d" stroke-width=".7"/></svg>
<div class="t" style="left:100.9px;top:93.6px;color:#6a6a6a;">Movie Clip</div>
<div class="a" style="left:22.7px;top:111.3px;width:144.7px;height:14.8px;background:#3d3d3d;border-radius:3px"></div>
<svg style="left:29.5px;top:115.7px" width="4" height="6" viewBox="0 0 4 6"><path d="M.5 .5l2.600 2.500-2.600 2.500" stroke="#ccc" stroke-width=".9" fill="none"/></svg>
<div class="t" style="left:36.6px;top:114.3px;color:#e8e8e8;">Units</div>
<svg style="left:156.0px;top:116.2px" width="8" height="5" viewBox="0 0 8 5"><g fill="#4d4d4d"><circle cx="1" cy="1" r=".6"/><circle cx="3" cy="1" r=".6"/><circle cx="5" cy="1" r=".6"/><circle cx="7" cy="1" r=".6"/><circle cx="1" cy="3.600" r=".6"/><circle cx="3" cy="3.600" r=".6"/><circle cx="5" cy="3.600" r=".6"/><circle cx="7" cy="3.600" r=".6"/></g></svg>
<div class="a" style="left:22.7px;top:128.4px;width:144.7px;height:14.8px;background:#3d3d3d;border-radius:3px"></div>
<svg style="left:29.5px;top:132.8px" width="4" height="6" viewBox="0 0 4 6"><path d="M.5 .5l2.600 2.500-2.600 2.500" stroke="#ccc" stroke-width=".9" fill="none"/></svg>
<div class="a" style="left:36.3px;top:132.2px;width:7.4px;height:7.4px;background:#4772b3;border-radius:1.500px"></div>
<svg style="left:36.3px;top:132.2px" width="7.400" height="7.400" viewBox="0 0 8 8"><path d="M1.800 4.200l1.600 1.600 3-3.600" stroke="#fff" stroke-width="1.100" fill="none"/></svg>
<div class="t" style="left:45.9px;top:131.4px;color:#e8e8e8;">Gravity</div>
<svg style="left:156.0px;top:133.3px" width="8" height="5" viewBox="0 0 8 5"><g fill="#4d4d4d"><circle cx="1" cy="1" r=".6"/><circle cx="3" cy="1" r=".6"/><circle cx="5" cy="1" r=".6"/><circle cx="7" cy="1" r=".6"/><circle cx="1" cy="3.600" r=".6"/><circle cx="3" cy="3.600" r=".6"/><circle cx="5" cy="3.600" r=".6"/><circle cx="7" cy="3.600" r=".6"/></g></svg>
<div class="a" style="left:22.7px;top:145.5px;width:144.7px;height:14.8px;background:#3d3d3d;border-radius:3px"></div>
<svg style="left:29.5px;top:149.9px" width="4" height="6" viewBox="0 0 4 6"><path d="M.5 .5l2.600 2.500-2.600 2.500" stroke="#ccc" stroke-width=".9" fill="none"/></svg>
<div class="t" style="left:36.6px;top:148.5px;color:#e8e8e8;">Simulation</div>
<svg style="left:156.0px;top:150.4px" width="8" height="5" viewBox="0 0 8 5"><g fill="#4d4d4d"><circle cx="1" cy="1" r=".6"/><circle cx="3" cy="1" r=".6"/><circle cx="5" cy="1" r=".6"/><circle cx="7" cy="1" r=".6"/><circle cx="1" cy="3.600" r=".6"/><circle cx="3" cy="3.600" r=".6"/><circle cx="5" cy="3.600" r=".6"/><circle cx="7" cy="3.600" r=".6"/></g></svg>
<div class="a" style="left:22.7px;top:162.6px;width:144.7px;height:14.8px;background:#3d3d3d;border-radius:3px"></div>
<svg style="left:29.5px;top:167.0px" width="4" height="6" viewBox="0 0 4 6"><path d="M.5 .5l2.600 2.500-2.600 2.500" stroke="#ccc" stroke-width=".9" fill="none"/></svg>
<div class="t" style="left:36.6px;top:165.6px;color:#e8e8e8;">Keying Sets</div>
<svg style="left:156.0px;top:167.5px" width="8" height="5" viewBox="0 0 8 5"><g fill="#4d4d4d"><circle cx="1" cy="1" r=".6"/><circle cx="3" cy="1" r=".6"/><circle cx="5" cy="1" r=".6"/><circle cx="7" cy="1" r=".6"/><circle cx="1" cy="3.600" r=".6"/><circle cx="3" cy="3.600" r=".6"/><circle cx="5" cy="3.600" r=".6"/><circle cx="7" cy="3.600" r=".6"/></g></svg>
<div class="a" style="left:22.7px;top:179.7px;width:144.7px;height:14.8px;background:#3d3d3d;border-radius:3px"></div>
<svg style="left:29.5px;top:184.1px" width="4" height="6" viewBox="0 0 4 6"><path d="M.5 .5l2.600 2.500-2.600 2.500" stroke="#ccc" stroke-width=".9" fill="none"/></svg>
<div class="t" style="left:36.6px;top:182.7px;color:#e8e8e8;">Audio</div>
<svg style="left:156.0px;top:184.6px" width="8" height="5" viewBox="0 0 8 5"><g fill="#4d4d4d"><circle cx="1" cy="1" r=".6"/><circle cx="3" cy="1" r=".6"/><circle cx="5" cy="1" r=".6"/><circle cx="7" cy="1" r=".6"/><circle cx="1" cy="3.600" r=".6"/><circle cx="3" cy="3.600" r=".6"/><circle cx="5" cy="3.600" r=".6"/><circle cx="7" cy="3.600" r=".6"/></g></svg>
<div class="a" style="left:22.7px;top:196.8px;width:144.7px;height:14.8px;background:#3d3d3d;border-radius:3px"></div>
<svg style="left:29.5px;top:201.2px" width="4" height="6" viewBox="0 0 4 6"><path d="M.5 .5l2.600 2.500-2.600 2.500" stroke="#ccc" stroke-width=".9" fill="none"/></svg>
<div class="t" style="left:36.6px;top:199.8px;color:#e8e8e8;">Rigid Body World</div>
<svg style="left:156.0px;top:201.7px" width="8" height="5" viewBox="0 0 8 5"><g fill="#4d4d4d"><circle cx="1" cy="1" r=".6"/><circle cx="3" cy="1" r=".6"/><circle cx="5" cy="1" r=".6"/><circle cx="7" cy="1" r=".6"/><circle cx="1" cy="3.600" r=".6"/><circle cx="3" cy="3.600" r=".6"/><circle cx="5" cy="3.600" r=".6"/><circle cx="7" cy="3.600" r=".6"/></g></svg>
<div class="a" style="left:22.7px;top:213.9px;width:144.7px;height:14.8px;background:#3d3d3d;border-radius:3px"></div>
<svg style="left:29.5px;top:218.3px" width="4" height="6" viewBox="0 0 4 6"><path d="M.5 .5l2.600 2.500-2.600 2.500" stroke="#ccc" stroke-width=".9" fill="none"/></svg>
<div class="t" style="left:36.6px;top:216.9px;color:#e8e8e8;">Animation</div>
<svg style="left:156.0px;top:218.8px" width="8" height="5" viewBox="0 0 8 5"><g fill="#4d4d4d"><circle cx="1" cy="1" r=".6"/><circle cx="3" cy="1" r=".6"/><circle cx="5" cy="1" r=".6"/><circle cx="7" cy="1" r=".6"/><circle cx="1" cy="3.600" r=".6"/><circle cx="3" cy="3.600" r=".6"/><circle cx="5" cy="3.600" r=".6"/><circle cx="7" cy="3.600" r=".6"/></g></svg>
<div class="a" style="left:22.7px;top:231.0px;width:144.7px;height:14.8px;background:#3d3d3d;border-radius:3px"></div>
<svg style="left:29.5px;top:235.4px" width="4" height="6" viewBox="0 0 4 6"><path d="M.5 .5l2.600 2.500-2.600 2.500" stroke="#ccc" stroke-width=".9" fill="none"/></svg>
<div class="t" style="left:36.6px;top:234.0px;color:#e8e8e8;">Custom Properties</div>
<svg style="left:156.0px;top:235.9px" width="8" height="5" viewBox="0 0 8 5"><g fill="#4d4d4d"><circle cx="1" cy="1" r=".6"/><circle cx="3" cy="1" r=".6"/><circle cx="5" cy="1" r=".6"/><circle cx="7" cy="1" r=".6"/><circle cx="1" cy="3.600" r=".6"/><circle cx="3" cy="3.600" r=".6"/><circle cx="5" cy="3.600" r=".6"/><circle cx="7" cy="3.600" r=".6"/></g></svg>
</div>
<div class="area" id="ne" style="left:1px;top:277px;width:825px;height:406px;background:#1d1d1d">
<svg style="left:0;top:0" width="825" height="406"><defs><pattern id="dots" width="45.75" height="45.75" patternUnits="userSpaceOnUse" x="12.45" y="32.9"><circle cx="1" cy="1" r=".7" fill="#2a2a2a"/></pattern></defs><rect width="825" height="406" fill="url(#dots)"/></svg>
<svg style="left:0;top:0" width="825" height="406" viewBox="1 277 825 406"><path d="M5.5 339.6C27.5 339.6 18.6 373.3 40.6 373.3" stroke="#111" stroke-width="2.7" fill="none" opacity=".55"/><path d="M5.5 339.6C27.5 339.6 18.6 373.3 40.6 373.3" stroke="#00d6a3" stroke-width="1.5" fill="none" opacity="1"/><path d="M104.8 340.6C164.8 340.6 242.0 347.3 302.0 347.3" stroke="#111" stroke-width="2.7" fill="none" opacity=".55"/><path d="M104.8 340.6C164.8 340.6 242.0 347.3 302.0 347.3" stroke="#00d6a3" stroke-width="1.5" fill="none" opacity="1"/><path d="M366.0 336.3C390.0 336.3 384.9 361.7 408.9 361.7" stroke="#111" stroke-width="2.7" fill="none" opacity=".55"/><path d="M366.0 336.3C390.0 336.3 384.9 361.7 408.9 361.7" stroke="#00d6a3" stroke-width="1.5" fill="none" opacity="1"/><path d="M373.8 475.3C400.8 475.3 381.9 381.8 408.9 381.8" stroke="#111" stroke-width="2.7" fill="none" opacity=".55"/><path d="M373.8 475.3C400.8 475.3 381.9 381.8 408.9 381.8" stroke="#00d6a3" stroke-width="1.5" fill="none" opacity="1"/><path d="M472.2 350.3C502.2 350.3 473.1 565.5 503.1 565.5" stroke="#111" stroke-width="2.7" fill="none" opacity=".55"/><path d="M472.2 350.3C502.2 350.3 473.1 565.5 503.1 565.5" stroke="#00d6a3" stroke-width="1.5" fill="none" opacity="1"/><path d="M344.5 570.7C414.5 570.7 433.1 545.5 503.1 545.5" stroke="#111" stroke-width="2.7" fill="none" opacity=".55"/><path d="M344.5 570.7C414.5 570.7 433.1 545.5 503.1 545.5" stroke="#00d6a3" stroke-width="1.5" fill="none" opacity="1"/><path d="M566.8 534.0C580.8 534.0 586.0 538.0 600.0 538.0" stroke="#111" stroke-width="2.7" fill="none" opacity=".55"/><path d="M566.8 534.0C580.8 534.0 586.0 538.0 600.0 538.0" stroke="#00d6a3" stroke-width="1.5" fill="none" opacity="1"/><path d="M6.2 571.2C46.2 571.2 81.2 581.8 121.2 581.8" stroke="#111" stroke-width="2.7" fill="none" opacity=".55"/><path d="M6.2 571.2C46.2 571.2 81.2 581.8 121.2 581.8" stroke="#00d6a3" stroke-width="1.5" fill="none" opacity="1"/><path d="M185.0 570.0C233.0 570.0 233.5 604.7 281.5 604.7" stroke="#111" stroke-width="2.7" fill="none" opacity=".55"/><path d="M185.0 570.0C233.0 570.0 233.5 604.7 281.5 604.7" stroke="#00d6a3" stroke-width="1.5" fill="none" opacity="1"/><path d="M104.8 350.6C124.8 350.6 106.2 425.5 126.2 425.5" stroke="#111" stroke-width="2.1" fill="none" opacity=".55"/><path d="M104.8 350.6C124.8 350.6 106.2 425.5 126.2 425.5" stroke="#5e8f62" stroke-width="0.9" fill="none" stroke-dasharray="3 1.2" opacity="1"/><path d="M104.8 350.6C126.8 350.6 104.8 511.7 126.8 511.7" stroke="#111" stroke-width="2.1" fill="none" opacity=".55"/><path d="M104.8 350.6C126.8 350.6 104.8 511.7 126.8 511.7" stroke="#5e8f62" stroke-width="0.9" fill="none" stroke-dasharray="3 1.2" opacity="1"/><path d="M188.9 391.6C202.9 391.6 199.9 412.4 213.9 412.4" stroke="#111" stroke-width="2.1" fill="none" opacity=".55"/><path d="M188.9 391.6C202.9 391.6 199.9 412.4 213.9 412.4" stroke="#a1a1a1" stroke-width="0.9" fill="none" opacity="1"/><path d="M190.1 477.5C206.1 477.5 197.9 422.5 213.9 422.5" stroke="#111" stroke-width="2.1" fill="none" opacity=".55"/><path d="M190.1 477.5C206.1 477.5 197.9 422.5 213.9 422.5" stroke="#a1a1a1" stroke-width="0.9" fill="none" opacity="1"/><path d="M278.2 391.0C292.2 391.0 288.0 377.5 302.0 377.5" stroke="#111" stroke-width="2.1" fill="none" opacity=".55"/><path d="M278.2 391.0C292.2 391.0 288.0 377.5 302.0 377.5" stroke="#5a5ac0" stroke-width="0.9" fill="none" opacity="1"/><path d="M85.0 647.5C107.0 647.5 99.2 601.8 121.2 601.8" stroke="#111" stroke-width="2.1" fill="none" opacity=".55"/><path d="M85.0 647.5C107.0 647.5 99.2 601.8 121.2 601.8" stroke="#5e8f62" stroke-width="0.9" fill="none" opacity="1"/><path d="M85.0 647.5C109.0 647.5 109.2 674.5 133.2 674.5" stroke="#111" stroke-width="2.1" fill="none" opacity=".55"/><path d="M85.0 647.5C109.0 647.5 109.2 674.5 133.2 674.5" stroke="#8aa08a" stroke-width="0.9" fill="none" opacity="1"/><path d="M196.8 640.5C240.8 640.5 237.5 614.8 281.5 614.8" stroke="#111" stroke-width="2.1" fill="none" opacity=".55"/><path d="M196.8 640.5C240.8 640.5 237.5 614.8 281.5 614.8" stroke="#a890b4" stroke-width="0.9" fill="none" stroke-dasharray="3 1.2" opacity="1"/></svg>
<div class="a" style="left:40.3px;top:48.3px;width:63.5px;height:74.2px;background:#303030;border-radius:2.5px;box-shadow:0 1px 3px rgba(0,0,0,.6),0 0 0 .5px #151515"></div>
<div class="a" style="left:40.3px;top:48.3px;width:63.5px;height:8.5px;background:#1d8a6c;border-radius:2.5px 2.5px 0 0"></div>
<svg style="left:44.5px;top:51.1px" width="4.800000000000001" height="3.2" viewBox="0 0 6 4"><path d="M.5 .5l2.5 2.6 2.5-2.6" stroke="#e8e8e8" stroke-width=".9" fill="none"/></svg>
<div class="t" style="left:50.9px;top:48.2px;color:#f2f2f2;font-size:6.15px;">Duplicate Elements</div>
<div class="t r" style="right:726.4px;top:59.1px;color:#dedede;font-size:6.15px;">Geometry</div>
<div class="t r" style="right:726.4px;top:69.1px;color:#dedede;font-size:6.15px;">Duplicate Index</div>
<div class="a" style="left:44.8px;top:81.9px;width:54.4px;height:8.2px;background:#282828;border-radius:2px;box-shadow:0 0 0 .5px #3d3d3d"></div>
<div class="t" style="left:47.8px;top:81.5px;color:#dedede;font-size:6.15px;">Point</div>
<svg style="left:92.6px;top:84.7px" width="4.5" height="3.0" viewBox="0 0 6 4"><path d="M.5 .5l2.5 2.6 2.5-2.6" stroke="#ccc" stroke-width=".9" fill="none"/></svg>
<div class="t" style="left:44.8px;top:91.8px;color:#dedede;font-size:6.15px;">Geometry</div>
<div class="t" style="left:44.8px;top:101.8px;color:#dedede;font-size:6.15px;">Selection</div>
<div class="a" style="left:44.8px;top:112.3px;width:54.4px;height:7.8px;background:#545454;border-radius:2px"></div>
<div class="t" style="left:51.4px;top:111.7px;color:#dedede;font-size:6.15px;">Amount</div>
<div class="t r" style="right:732.0px;top:111.7px;color:#dedede;font-size:6.15px;">7</div>
<div class="a" style="left:125.4px;top:98.7px;width:62.8px;height:67.3px;background:#303030;border-radius:2.5px;box-shadow:0 1px 3px rgba(0,0,0,.6),0 0 0 .5px #151515"></div>
<div class="a" style="left:125.4px;top:98.7px;width:62.8px;height:9.2px;background:#246a94;border-radius:2.5px 2.5px 0 0"></div>
<svg style="left:129.6px;top:101.9px" width="4.800000000000001" height="3.2" viewBox="0 0 6 4"><path d="M.5 .5l2.5 2.6 2.5-2.6" stroke="#e8e8e8" stroke-width=".9" fill="none"/></svg>
<div class="t" style="left:136.0px;top:98.9px;color:#f2f2f2;font-size:6.15px;">Multiply</div>
<div class="t r" style="right:642.2px;top:110.1px;color:#dedede;font-size:6.15px;">Value</div>
<div class="a" style="left:129.9px;top:122.7px;width:53.7px;height:8.2px;background:#282828;border-radius:2px;box-shadow:0 0 0 .5px #3d3d3d"></div>
<div class="t" style="left:132.9px;top:122.3px;color:#dedede;font-size:6.15px;">Multiply</div>
<svg style="left:177.0px;top:125.5px" width="4.5" height="3.0" viewBox="0 0 6 4"><path d="M.5 .5l2.5 2.6 2.5-2.6" stroke="#ccc" stroke-width=".9" fill="none"/></svg>
<div class="a" style="left:129.9px;top:135.7px;width:5.4px;height:5.4px;background:#545454;border-radius:1px"></div>
<div class="t" style="left:137.1px;top:133.9px;color:#dedede;font-size:6.15px;">Clamp</div>
<div class="t" style="left:129.9px;top:144.0px;color:#dedede;font-size:6.15px;">Value</div>
<div class="a" style="left:129.9px;top:154.4px;width:53.7px;height:7.8px;background:#545454;border-radius:2px"></div>
<div class="t" style="left:136.5px;top:153.8px;color:#dedede;font-size:6.15px;">Value</div>
<div class="t r" style="right:647.6px;top:153.8px;color:#dedede;font-size:6.15px;">2.700</div>
<div class="a" style="left:125.9px;top:184.7px;width:63.3px;height:67.3px;background:#303030;border-radius:2.5px;box-shadow:0 1px 3px rgba(0,0,0,.6),0 0 0 .5px #151515"></div>
<div class="a" style="left:125.9px;top:184.7px;width:63.3px;height:9.2px;background:#246a94;border-radius:2.5px 2.5px 0 0"></div>
<svg style="left:130.1px;top:187.9px" width="4.800000000000001" height="3.2" viewBox="0 0 6 4"><path d="M.5 .5l2.5 2.6 2.5-2.6" stroke="#e8e8e8" stroke-width=".9" fill="none"/></svg>
<div class="t" style="left:136.5px;top:184.9px;color:#f2f2f2;font-size:6.15px;">Multiply</div>
<div class="t r" style="right:641.2px;top:196.1px;color:#dedede;font-size:6.15px;">Value</div>
<div class="a" style="left:130.4px;top:208.7px;width:54.2px;height:8.2px;background:#282828;border-radius:2px;box-shadow:0 0 0 .5px #3d3d3d"></div>
<div class="t" style="left:133.4px;top:208.3px;color:#dedede;font-size:6.15px;">Multiply</div>
<svg style="left:178.0px;top:211.5px" width="4.5" height="3.0" viewBox="0 0 6 4"><path d="M.5 .5l2.5 2.6 2.5-2.6" stroke="#ccc" stroke-width=".9" fill="none"/></svg>
<div class="a" style="left:130.4px;top:221.7px;width:5.4px;height:5.4px;background:#545454;border-radius:1px"></div>
<div class="t" style="left:137.6px;top:219.9px;color:#dedede;font-size:6.15px;">Clamp</div>
<div class="t" style="left:130.4px;top:230.0px;color:#dedede;font-size:6.15px;">Value</div>
<div class="a" style="left:130.4px;top:240.4px;width:54.2px;height:7.8px;background:#545454;border-radius:2px"></div>
<div class="t" style="left:137.0px;top:239.8px;color:#dedede;font-size:6.15px;">Value</div>
<div class="t r" style="right:646.6px;top:239.8px;color:#dedede;font-size:6.15px;">0.300</div>
<div class="a" style="left:214.1px;top:98.0px;width:63.1px;height:54.2px;background:#303030;border-radius:2.5px;box-shadow:0 1px 3px rgba(0,0,0,.6),0 0 0 .5px #151515"></div>
<div class="a" style="left:214.1px;top:98.0px;width:63.1px;height:9.3px;background:#246a94;border-radius:2.5px 2.5px 0 0"></div>
<svg style="left:218.3px;top:101.2px" width="4.800000000000001" height="3.2" viewBox="0 0 6 4"><path d="M.5 .5l2.5 2.6 2.5-2.6" stroke="#e8e8e8" stroke-width=".9" fill="none"/></svg>
<div class="t" style="left:224.7px;top:98.2px;color:#f2f2f2;font-size:6.15px;">Combine XYZ</div>
<div class="t r" style="right:553.1px;top:109.5px;color:#dedede;font-size:6.15px;">Vector</div>
<div class="a" style="left:219.6px;top:121.5px;width:52.5px;height:7.8px;background:#545454;border-radius:2px"></div>
<div class="t" style="left:226.2px;top:120.9px;color:#dedede;font-size:6.15px;">X</div>
<div class="t r" style="right:559.1px;top:120.9px;color:#dedede;font-size:6.15px;">0.000</div>
<div class="t" style="left:219.7px;top:130.9px;color:#dedede;font-size:6.15px;">Y</div>
<div class="t" style="left:219.7px;top:141.0px;color:#dedede;font-size:6.15px;">Z</div>
<div class="a" style="left:301.0px;top:43.7px;width:64.1px;height:63.6px;background:#303030;border-radius:2.5px;box-shadow:0 1px 3px rgba(0,0,0,.6),0 0 0 .5px #151515"></div>
<div class="a" style="left:301.0px;top:43.7px;width:64.1px;height:8.6px;background:#1d8a6c;border-radius:2.5px 2.5px 0 0"></div>
<svg style="left:305.2px;top:46.6px" width="4.800000000000001" height="3.2" viewBox="0 0 6 4"><path d="M.5 .5l2.5 2.6 2.5-2.6" stroke="#e8e8e8" stroke-width=".9" fill="none"/></svg>
<div class="t" style="left:311.6px;top:43.6px;color:#f2f2f2;font-size:6.15px;">Set Position</div>
<div class="t r" style="right:465.6px;top:54.8px;color:#dedede;font-size:6.15px;">Geometry</div>
<div class="t" style="left:306.2px;top:65.8px;color:#dedede;font-size:6.15px;">Geometry</div>
<div class="t" style="left:306.2px;top:75.9px;color:#dedede;font-size:6.15px;">Selection</div>
<div class="t" style="left:306.2px;top:86.0px;color:#dedede;font-size:6.15px;">Position</div>
<div class="t" style="left:306.2px;top:96.0px;color:#dedede;font-size:6.15px;">Offset</div>
<div class="a" style="left:407.9px;top:58.1px;width:63.3px;height:150.5px;background:#303030;border-radius:2.5px;box-shadow:0 1px 3px rgba(0,0,0,.6),0 0 0 .5px #151515"></div>
<div class="a" style="left:407.9px;top:58.1px;width:63.3px;height:8.4px;background:#1d8a6c;border-radius:2.5px 2.5px 0 0"></div>
<svg style="left:412.1px;top:60.9px" width="4.800000000000001" height="3.2" viewBox="0 0 6 4"><path d="M.5 .5l2.5 2.6 2.5-2.6" stroke="#e8e8e8" stroke-width=".9" fill="none"/></svg>
<div class="t" style="left:418.5px;top:57.9px;color:#f2f2f2;font-size:6.15px;">Instance on Points</div>
<div class="t r" style="right:359.2px;top:68.9px;color:#dedede;font-size:6.15px;">Instances</div>
<div class="t" style="left:412.7px;top:80.3px;color:#dedede;font-size:6.15px;">Points</div>
<div class="t" style="left:412.7px;top:90.3px;color:#dedede;font-size:6.15px;">Selection</div>
<div class="t" style="left:412.7px;top:100.4px;color:#dedede;font-size:6.15px;">Instance</div>
<div class="a" style="left:412.5px;top:112.3px;width:5.4px;height:5.4px;background:#545454;border-radius:1px"></div>
<div class="t" style="left:419.7px;top:110.5px;color:#dedede;font-size:6.15px;">Pick Instance</div>
<div class="t" style="left:412.7px;top:120.6px;color:#dedede;font-size:6.15px;">Instance Index</div>
<div class="t" style="left:412.7px;top:130.6px;color:#dedede;font-size:6.15px;">Rotation</div>
<div class="a" style="left:412.5px;top:140.9px;width:54.1px;height:8.2px;background:#545454;border-radius:2px 2px 0 0"></div>
<div class="t" style="left:419.5px;top:140.5px;color:#dedede;font-size:6.15px;">X</div>
<div class="t r" style="right:364.6px;top:140.5px;color:#dedede;font-size:6.15px;">0°</div>
<div class="a" style="left:412.5px;top:150.1px;width:54.1px;height:8.2px;background:#545454;border-radius:0"></div>
<div class="t" style="left:419.5px;top:149.8px;color:#dedede;font-size:6.15px;">Y</div>
<div class="t r" style="right:364.6px;top:149.8px;color:#dedede;font-size:6.15px;">0°</div>
<div class="a" style="left:412.5px;top:159.4px;width:54.1px;height:8.2px;background:#545454;border-radius:0 0 2px 2px"></div>
<div class="t" style="left:419.5px;top:159.0px;color:#dedede;font-size:6.15px;">Z</div>
<div class="t r" style="right:364.6px;top:159.0px;color:#dedede;font-size:6.15px;">0°</div>
<div class="t" style="left:412.7px;top:169.0px;color:#dedede;font-size:6.15px;">Scale</div>
<div class="a" style="left:412.5px;top:179.6px;width:54.1px;height:7.4px;background:#545454;border-radius:2px 2px 0 0"></div>
<div class="t" style="left:419.5px;top:178.8px;color:#dedede;font-size:6.15px;">X</div>
<div class="t r" style="right:364.6px;top:178.8px;color:#dedede;font-size:6.15px;">1.000</div>
<div class="a" style="left:412.5px;top:188.7px;width:54.1px;height:7.4px;background:#545454;border-radius:0"></div>
<div class="t" style="left:419.5px;top:187.9px;color:#dedede;font-size:6.15px;">Y</div>
<div class="t r" style="right:364.6px;top:187.9px;color:#dedede;font-size:6.15px;">1.000</div>
<div class="a" style="left:412.5px;top:197.8px;width:54.1px;height:7.4px;background:#545454;border-radius:0 0 2px 2px"></div>
<div class="t" style="left:419.5px;top:197.0px;color:#dedede;font-size:6.15px;">Z</div>
<div class="t r" style="right:364.6px;top:197.0px;color:#dedede;font-size:6.15px;">1.000</div>
<div class="a" style="left:502.1px;top:241.8px;width:63.7px;height:150.5px;background:#303030;border-radius:2.5px;box-shadow:0 1px 3px rgba(0,0,0,.6),0 0 0 .5px #151515"></div>
<div class="a" style="left:502.1px;top:241.8px;width:63.7px;height:8.4px;background:#1d8a6c;border-radius:2.5px 2.5px 0 0"></div>
<svg style="left:506.3px;top:244.6px" width="4.800000000000001" height="3.2" viewBox="0 0 6 4"><path d="M.5 .5l2.5 2.6 2.5-2.6" stroke="#e8e8e8" stroke-width=".9" fill="none"/></svg>
<div class="t" style="left:512.7px;top:241.6px;color:#f2f2f2;font-size:6.15px;">Instance on Points</div>
<div class="t r" style="right:264.6px;top:252.6px;color:#dedede;font-size:6.15px;">Instances</div>
<div class="t" style="left:506.9px;top:264.0px;color:#dedede;font-size:6.15px;">Points</div>
<div class="t" style="left:506.9px;top:274.0px;color:#dedede;font-size:6.15px;">Selection</div>
<div class="t" style="left:506.9px;top:284.1px;color:#dedede;font-size:6.15px;">Instance</div>
<div class="a" style="left:506.7px;top:296.0px;width:5.4px;height:5.4px;background:#545454;border-radius:1px"></div>
<div class="t" style="left:513.9px;top:294.2px;color:#dedede;font-size:6.15px;">Pick Instance</div>
<div class="t" style="left:506.9px;top:304.3px;color:#dedede;font-size:6.15px;">Instance Index</div>
<div class="t" style="left:506.9px;top:314.3px;color:#dedede;font-size:6.15px;">Rotation</div>
<div class="a" style="left:506.7px;top:324.6px;width:54.5px;height:8.2px;background:#545454;border-radius:2px 2px 0 0"></div>
<div class="t" style="left:513.7px;top:324.2px;color:#dedede;font-size:6.15px;">X</div>
<div class="t r" style="right:270.0px;top:324.2px;color:#dedede;font-size:6.15px;">0°</div>
<div class="a" style="left:506.7px;top:333.8px;width:54.5px;height:8.2px;background:#545454;border-radius:0"></div>
<div class="t" style="left:513.7px;top:333.4px;color:#dedede;font-size:6.15px;">Y</div>
<div class="t r" style="right:270.0px;top:333.4px;color:#dedede;font-size:6.15px;">0°</div>
<div class="a" style="left:506.7px;top:343.1px;width:54.5px;height:8.2px;background:#545454;border-radius:0 0 2px 2px"></div>
<div class="t" style="left:513.7px;top:342.7px;color:#dedede;font-size:6.15px;">Z</div>
<div class="t r" style="right:270.0px;top:342.7px;color:#dedede;font-size:6.15px;">0°</div>
<div class="t" style="left:506.9px;top:352.7px;color:#dedede;font-size:6.15px;">Scale</div>
<div class="a" style="left:506.7px;top:363.3px;width:54.5px;height:7.4px;background:#545454;border-radius:2px 2px 0 0"></div>
<div class="t" style="left:513.7px;top:362.5px;color:#dedede;font-size:6.15px;">X</div>
<div class="t r" style="right:270.0px;top:362.5px;color:#dedede;font-size:6.15px;">1.000</div>
<div class="a" style="left:506.7px;top:372.4px;width:54.5px;height:7.4px;background:#545454;border-radius:0"></div>
<div class="t" style="left:513.7px;top:371.6px;color:#dedede;font-size:6.15px;">Y</div>
<div class="t r" style="right:270.0px;top:371.6px;color:#dedede;font-size:6.15px;">1.000</div>
<div class="a" style="left:506.7px;top:381.5px;width:54.5px;height:7.4px;background:#545454;border-radius:0 0 2px 2px"></div>
<div class="t" style="left:513.7px;top:380.7px;color:#dedede;font-size:6.15px;">Z</div>
<div class="t r" style="right:270.0px;top:380.7px;color:#dedede;font-size:6.15px;">1.000</div>
<div class="a" style="left:309.5px;top:182.8px;width:63.3px;height:65.1px;background:#303030;border-radius:2.5px;box-shadow:0 1px 3px rgba(0,0,0,.6),0 0 0 .5px #151515"></div>
<div class="a" style="left:309.5px;top:182.8px;width:63.3px;height:9.1px;background:#8a2f4a;border-radius:2.5px 2.5px 0 0"></div>
<svg style="left:313.7px;top:186.0px" width="4.800000000000001" height="3.2" viewBox="0 0 6 4"><path d="M.5 .5l2.5 2.6 2.5-2.6" stroke="#e8e8e8" stroke-width=".9" fill="none"/></svg>
<div class="t" style="left:320.1px;top:183.0px;color:#f2f2f2;font-size:6.15px;">Collection Info</div>
<div class="t r" style="right:457.6px;top:193.8px;color:#dedede;font-size:6.15px;">Instances</div>
<div class="a" style="left:314.1px;top:206.6px;width:26.7px;height:8.2px;background:#4772b3;border-radius:2px 0 0 2px"></div>
<div class="a" style="left:341.2px;top:206.6px;width:26.4px;height:8.2px;background:#545454;border-radius:0 2px 2px 0"></div>
<div class="t c" style="left:314.1px;width:26.7px;text-align:center;top:206.2px;color:#fff;font-size:6.15px;">Original</div>
<div class="t c" style="left:341.2px;width:26.4px;text-align:center;top:206.2px;color:#e6e6e6;font-size:6.15px;">Relative</div>
<div class="a" style="left:314.1px;top:217.2px;width:53.5px;height:7.8px;background:#1d1d1d;border-radius:2px;box-shadow:0 0 0 .5px #3d3d3d"></div>
<svg style="left:316.0px;top:217.6px" width="7" height="7" viewBox="0 0 7 7"><path d="M.4 .6h6.200v1.700H.4z" fill="#eee"/><path d="M.9 2.700h5.200v3.400H.9z" fill="#eee"/><rect x="2.500" y="3.400" width="2" height="1" fill="#1d1d1d"/></svg>
<div class="t" style="left:326.6px;top:216.6px;color:#dedede;font-size:6.15px;">Kawara M...</div>
<svg style="left:360.6px;top:219px" width="4.400" height="4.400" viewBox="0 0 5 5"><path d="M.5 .5l4 4M4.500 .5l-4 4" stroke="#ccc" stroke-width=".8"/></svg>
<div class="a" style="left:314.1px;top:228.0px;width:5.4px;height:5.4px;background:#545454;border-radius:1px"></div>
<div class="t" style="left:321.3px;top:226.2px;color:#dedede;font-size:6.15px;">Separate Children</div>
<div class="a" style="left:314.1px;top:238.1px;width:5.4px;height:5.4px;background:#545454;border-radius:1px"></div>
<div class="t" style="left:321.3px;top:236.3px;color:#dedede;font-size:6.15px;">Reset Children</div>
<div class="a" style="left:120.2px;top:277.2px;width:63.8px;height:54.0px;background:#303030;border-radius:2.5px;box-shadow:0 1px 3px rgba(0,0,0,.6),0 0 0 .5px #151515"></div>
<div class="a" style="left:120.2px;top:277.2px;width:63.8px;height:9.0px;background:#1d8a6c;border-radius:2.5px 2.5px 0 0"></div>
<svg style="left:124.5px;top:280.4px" width="4.800000000000001" height="3.2" viewBox="0 0 6 4"><path d="M.5 .5l2.5 2.6 2.5-2.6" stroke="#e8e8e8" stroke-width=".9" fill="none"/></svg>
<div class="t" style="left:130.8px;top:277.4px;color:#f2f2f2;font-size:6.15px;">Set ID</div>
<div class="t r" style="right:646.4px;top:288.5px;color:#dedede;font-size:6.15px;">Geometry</div>
<div class="t" style="left:125.0px;top:300.2px;color:#dedede;font-size:6.15px;">Geometry</div>
<div class="t" style="left:125.0px;top:310.0px;color:#dedede;font-size:6.15px;">Selection</div>
<div class="t" style="left:125.0px;top:320.2px;color:#dedede;font-size:6.15px;">ID</div>
<div class="a" style="left:20.2px;top:355.0px;width:63.8px;height:22.2px;background:#303030;border-radius:2.5px;box-shadow:0 1px 3px rgba(0,0,0,.6),0 0 0 .5px #151515"></div>
<div class="a" style="left:20.2px;top:355.0px;width:63.8px;height:8.8px;background:#8a2f4a;border-radius:2.5px 2.5px 0 0"></div>
<svg style="left:24.4px;top:358.0px" width="4.800000000000001" height="3.2" viewBox="0 0 6 4"><path d="M.5 .5l2.5 2.6 2.5-2.6" stroke="#e8e8e8" stroke-width=".9" fill="none"/></svg>
<div class="t" style="left:30.9px;top:355.0px;color:#f2f2f2;font-size:6.15px;">ID</div>
<div class="t r" style="right:746.0px;top:366.0px;color:#dedede;font-size:6.15px;">ID</div>
<div class="a" style="left:132.2px;top:348.0px;width:63.5px;height:75.0px;background:#303030;border-radius:2.5px;box-shadow:0 1px 3px rgba(0,0,0,.6),0 0 0 .5px #151515"></div>
<div class="a" style="left:132.2px;top:348.0px;width:63.5px;height:9.2px;background:#246a94;border-radius:2.5px 2.5px 0 0"></div>
<svg style="left:136.4px;top:351.2px" width="4.800000000000001" height="3.2" viewBox="0 0 6 4"><path d="M.5 .5l2.5 2.6 2.5-2.6" stroke="#e8e8e8" stroke-width=".9" fill="none"/></svg>
<div class="t" style="left:142.8px;top:348.2px;color:#f2f2f2;font-size:6.15px;">Not Equal</div>
<div class="t r" style="right:634.6px;top:359.0px;color:#dedede;font-size:6.15px;">Result</div>
<div class="a" style="left:137.0px;top:372.1px;width:54.0px;height:8.2px;background:#282828;border-radius:2px;box-shadow:0 0 0 .5px #3d3d3d"></div>
<div class="t" style="left:140.0px;top:371.8px;color:#dedede;font-size:6.15px;">Float</div>
<svg style="left:184.4px;top:375.0px" width="4.5" height="3.0" viewBox="0 0 6 4"><path d="M.5 .5l2.5 2.6 2.5-2.6" stroke="#ccc" stroke-width=".9" fill="none"/></svg>
<div class="a" style="left:137.0px;top:383.6px;width:54.0px;height:8.2px;background:#282828;border-radius:2px;box-shadow:0 0 0 .5px #3d3d3d"></div>
<div class="t" style="left:140.0px;top:383.2px;color:#dedede;font-size:6.15px;">Not Equal</div>
<svg style="left:184.4px;top:386.5px" width="4.5" height="3.0" viewBox="0 0 6 4"><path d="M.5 .5l2.5 2.6 2.5-2.6" stroke="#ccc" stroke-width=".9" fill="none"/></svg>
<div class="t" style="left:137.6px;top:393.0px;color:#dedede;font-size:6.15px;">A</div>
<div class="a" style="left:137.0px;top:402.3px;width:54.0px;height:8.0px;background:#545454;border-radius:2px"></div>
<div class="a" style="left:280.5px;top:278.3px;width:63.0px;height:66.2px;background:#303030;border-radius:2.5px;box-shadow:0 1px 3px rgba(0,0,0,.6),0 0 0 .5px #151515"></div>
<div class="a" style="left:280.5px;top:278.3px;width:63.0px;height:8.7px;background:#1d8a6c;border-radius:2.5px 2.5px 0 0"></div>
<svg style="left:284.7px;top:281.2px" width="4.800000000000001" height="3.2" viewBox="0 0 6 4"><path d="M.5 .5l2.5 2.6 2.5-2.6" stroke="#e8e8e8" stroke-width=".9" fill="none"/></svg>
<div class="t" style="left:291.1px;top:278.2px;color:#f2f2f2;font-size:6.15px;">Delete Geometry</div>
<div class="t r" style="right:487.0px;top:289.2px;color:#dedede;font-size:6.15px;">Geometry</div>
<div class="a" style="left:285.0px;top:302.2px;width:54.0px;height:8.2px;background:#282828;border-radius:2px;box-shadow:0 0 0 .5px #3d3d3d"></div>
<div class="t" style="left:288.0px;top:301.8px;color:#dedede;font-size:6.15px;">Point</div>
<svg style="left:332.4px;top:305.0px" width="4.5" height="3.0" viewBox="0 0 6 4"><path d="M.5 .5l2.5 2.6 2.5-2.6" stroke="#ccc" stroke-width=".9" fill="none"/></svg>
<div class="a" style="left:285.0px;top:313.4px;width:54.0px;height:8.2px;background:#282828;border-radius:2px;box-shadow:0 0 0 .5px #3d3d3d"></div>
<div class="t" style="left:288.0px;top:313.0px;color:#dedede;font-size:6.15px;">All</div>
<svg style="left:332.4px;top:316.2px" width="4.5" height="3.0" viewBox="0 0 6 4"><path d="M.5 .5l2.5 2.6 2.5-2.6" stroke="#ccc" stroke-width=".9" fill="none"/></svg>
<div class="t" style="left:285.4px;top:323.2px;color:#dedede;font-size:6.15px;">Geometry</div>
<div class="t" style="left:285.4px;top:333.3px;color:#dedede;font-size:6.15px;">Selection</div>
<div class="a" style="left:-5.0px;top:46.8px;width:8.6px;height:120.8px;background:#303030;border-radius:2.5px;box-shadow:0 1px 3px rgba(0,0,0,.6)"></div>
<div class="a" style="left:-5.0px;top:46.8px;width:8.6px;height:9.2px;background:#1d8a6c;border-radius:2.5px 2.5px 0 0"></div>
<div class="a" style="left:-5.0px;top:278.0px;width:10.2px;height:32.5px;background:#303030;border-radius:2.5px;box-shadow:0 1px 3px rgba(0,0,0,.6)"></div>
<svg style="left:0;top:0" width="825" height="406" viewBox="1 277 825 406"><circle cx="104.8" cy="340.6" r="1.9" fill="#00d6a3" stroke="#111" stroke-width=".6"/><path d="M104.8 348.3l2.3 2.3-2.3 2.3-2.3-2.3z" fill="#6fae72" stroke="#111" stroke-width=".6"/><circle cx="104.8" cy="350.6" r=".6" fill="#111" opacity=".6"/><circle cx="41.3" cy="373.3" r="1.9" fill="#00d6a3" stroke="#111" stroke-width=".6"/><path d="M41.3 381.0l2.3 2.3-2.3 2.3-2.3-2.3z" fill="#cca6d6" stroke="#111" stroke-width=".6"/><circle cx="41.3" cy="383.3" r=".6" fill="#111" opacity=".6"/><path d="M41.3 390.9l2.3 2.3-2.3 2.3-2.3-2.3z" fill="#6fae72" stroke="#111" stroke-width=".6"/><circle cx="41.3" cy="393.2" r=".6" fill="#111" opacity=".6"/><path d="M189.2 389.3l2.3 2.3-2.3 2.3-2.3-2.3z" fill="#a1a1a1" stroke="#111" stroke-width=".6"/><circle cx="189.2" cy="391.6" r=".6" fill="#111" opacity=".6"/><path d="M126.4 423.2l2.3 2.3-2.3 2.3-2.3-2.3z" fill="#a1a1a1" stroke="#111" stroke-width=".6"/><circle cx="126.4" cy="425.5" r=".6" fill="#111" opacity=".6"/><path d="M126.4 433.0l2.3 2.3-2.3 2.3-2.3-2.3z" fill="#a1a1a1" stroke="#111" stroke-width=".6"/><circle cx="126.4" cy="435.3" r=".6" fill="#111" opacity=".6"/><path d="M190.2 475.3l2.3 2.3-2.3 2.3-2.3-2.3z" fill="#a1a1a1" stroke="#111" stroke-width=".6"/><circle cx="190.2" cy="477.6" r=".6" fill="#111" opacity=".6"/><path d="M126.9 509.2l2.3 2.3-2.3 2.3-2.3-2.3z" fill="#a1a1a1" stroke="#111" stroke-width=".6"/><circle cx="126.9" cy="511.5" r=".6" fill="#111" opacity=".6"/><path d="M126.9 519.0l2.3 2.3-2.3 2.3-2.3-2.3z" fill="#a1a1a1" stroke="#111" stroke-width=".6"/><circle cx="126.9" cy="521.3" r=".6" fill="#111" opacity=".6"/><path d="M278.2 388.7l2.3 2.3-2.3 2.3-2.3-2.3z" fill="#6363c7" stroke="#111" stroke-width=".6"/><circle cx="278.2" cy="391.0" r=".6" fill="#111" opacity=".6"/><path d="M215.1 400.1l2.3 2.3-2.3 2.3-2.3-2.3z" fill="#a1a1a1" stroke="#111" stroke-width=".6"/><circle cx="215.1" cy="402.4" r=".6" fill="#111" opacity=".6"/><path d="M215.1 410.1l2.3 2.3-2.3 2.3-2.3-2.3z" fill="#a1a1a1" stroke="#111" stroke-width=".6"/><circle cx="215.1" cy="412.4" r=".6" fill="#111" opacity=".6"/><path d="M215.1 420.2l2.3 2.3-2.3 2.3-2.3-2.3z" fill="#a1a1a1" stroke="#111" stroke-width=".6"/><circle cx="215.1" cy="422.5" r=".6" fill="#111" opacity=".6"/><circle cx="366.1" cy="336.3" r="1.9" fill="#00d6a3" stroke="#111" stroke-width=".6"/><circle cx="302.0" cy="347.3" r="1.9" fill="#00d6a3" stroke="#111" stroke-width=".6"/><path d="M302.0 355.1l2.3 2.3-2.3 2.3-2.3-2.3z" fill="#cca6d6" stroke="#111" stroke-width=".6"/><circle cx="302.0" cy="357.4" r=".6" fill="#111" opacity=".6"/><path d="M302.0 365.2l2.3 2.3-2.3 2.3-2.3-2.3z" fill="#6363c7" stroke="#111" stroke-width=".6"/><circle cx="302.0" cy="367.5" r=".6" fill="#111" opacity=".6"/><path d="M302.0 375.2l2.3 2.3-2.3 2.3-2.3-2.3z" fill="#6363c7" stroke="#111" stroke-width=".6"/><circle cx="302.0" cy="377.5" r=".6" fill="#111" opacity=".6"/><circle cx="472.2" cy="350.4" r="1.9" fill="#00d6a3" stroke="#111" stroke-width=".6"/><circle cx="408.9" cy="361.8" r="1.9" fill="#00d6a3" stroke="#111" stroke-width=".6"/><path d="M408.9 369.5l2.3 2.3-2.3 2.3-2.3-2.3z" fill="#cca6d6" stroke="#111" stroke-width=".6"/><circle cx="408.9" cy="371.8" r=".6" fill="#111" opacity=".6"/><circle cx="408.9" cy="381.9" r="1.9" fill="#00d6a3" stroke="#111" stroke-width=".6"/><path d="M408.9 389.7l2.3 2.3-2.3 2.3-2.3-2.3z" fill="#cca6d6" stroke="#111" stroke-width=".6"/><circle cx="408.9" cy="392.0" r=".6" fill="#111" opacity=".6"/><path d="M408.9 399.8l2.3 2.3-2.3 2.3-2.3-2.3z" fill="#6fae72" stroke="#111" stroke-width=".6"/><circle cx="408.9" cy="402.1" r=".6" fill="#111" opacity=".6"/><path d="M408.9 409.8l2.3 2.3-2.3 2.3-2.3-2.3z" fill="#a663c7" stroke="#111" stroke-width=".6"/><circle cx="408.9" cy="412.1" r=".6" fill="#111" opacity=".6"/><path d="M408.9 448.2l2.3 2.3-2.3 2.3-2.3-2.3z" fill="#6363c7" stroke="#111" stroke-width=".6"/><circle cx="408.9" cy="450.5" r=".6" fill="#111" opacity=".6"/><circle cx="566.8" cy="534.1" r="1.9" fill="#00d6a3" stroke="#111" stroke-width=".6"/><circle cx="503.1" cy="545.5" r="1.9" fill="#00d6a3" stroke="#111" stroke-width=".6"/><path d="M503.1 553.2l2.3 2.3-2.3 2.3-2.3-2.3z" fill="#cca6d6" stroke="#111" stroke-width=".6"/><circle cx="503.1" cy="555.5" r=".6" fill="#111" opacity=".6"/><circle cx="503.1" cy="565.6" r="1.9" fill="#00d6a3" stroke="#111" stroke-width=".6"/><path d="M503.1 573.4l2.3 2.3-2.3 2.3-2.3-2.3z" fill="#cca6d6" stroke="#111" stroke-width=".6"/><circle cx="503.1" cy="575.7" r=".6" fill="#111" opacity=".6"/><path d="M503.1 583.5l2.3 2.3-2.3 2.3-2.3-2.3z" fill="#6fae72" stroke="#111" stroke-width=".6"/><circle cx="503.1" cy="585.8" r=".6" fill="#111" opacity=".6"/><path d="M503.1 593.5l2.3 2.3-2.3 2.3-2.3-2.3z" fill="#a663c7" stroke="#111" stroke-width=".6"/><circle cx="503.1" cy="595.8" r=".6" fill="#111" opacity=".6"/><path d="M503.1 631.9l2.3 2.3-2.3 2.3-2.3-2.3z" fill="#6363c7" stroke="#111" stroke-width=".6"/><circle cx="503.1" cy="634.2" r=".6" fill="#111" opacity=".6"/><circle cx="373.8" cy="475.3" r="1.9" fill="#00d6a3" stroke="#111" stroke-width=".6"/><circle cx="310.5" cy="498.1" r="1.9" fill="#f5f5f5" stroke="#111" stroke-width=".6"/><circle cx="310.5" cy="507.7" r="1.9" fill="#cca6d6" stroke="#111" stroke-width=".6"/><circle cx="310.5" cy="517.8" r="1.9" fill="#cca6d6" stroke="#111" stroke-width=".6"/><circle cx="185.0" cy="570.0" r="1.9" fill="#00d6a3" stroke="#111" stroke-width=".6"/><circle cx="121.2" cy="581.8" r="1.9" fill="#00d6a3" stroke="#111" stroke-width=".6"/><path d="M121.2 589.2l2.3 2.3-2.3 2.3-2.3-2.3z" fill="#cca6d6" stroke="#111" stroke-width=".6"/><circle cx="121.2" cy="591.5" r=".6" fill="#111" opacity=".6"/><circle cx="121.2" cy="601.8" r="1.9" fill="#6fae72" stroke="#111" stroke-width=".6"/><path d="M85.0 645.2l2.3 2.3-2.3 2.3-2.3-2.3z" fill="#6fae72" stroke="#111" stroke-width=".6"/><circle cx="85.0" cy="647.5" r=".6" fill="#111" opacity=".6"/><path d="M196.8 638.2l2.3 2.3-2.3 2.3-2.3-2.3z" fill="#cca6d6" stroke="#111" stroke-width=".6"/><circle cx="196.8" cy="640.5" r=".6" fill="#111" opacity=".6"/><path d="M133.2 672.2l2.3 2.3-2.3 2.3-2.3-2.3z" fill="#d8d8d8" stroke="#111" stroke-width=".6"/><circle cx="133.2" cy="674.5" r=".6" fill="#111" opacity=".6"/><circle cx="344.5" cy="570.7" r="1.9" fill="#00d6a3" stroke="#111" stroke-width=".6"/><circle cx="281.5" cy="604.7" r="1.9" fill="#00d6a3" stroke="#111" stroke-width=".6"/><path d="M281.5 612.5l2.3 2.3-2.3 2.3-2.3-2.3z" fill="#cca6d6" stroke="#111" stroke-width=".6"/><circle cx="281.5" cy="614.8" r=".6" fill="#111" opacity=".6"/><circle cx="5.2" cy="339.6" r="1.9" fill="#00d6a3" stroke="#111" stroke-width=".6"/><circle cx="6.2" cy="571.2" r="1.9" fill="#00d6a3" stroke="#111" stroke-width=".6"/><circle cx="6.25" cy="581.25" r="1.900" fill="#222" stroke="#9a9a9a" stroke-width=".7"/></svg>
<div class="a" style="left:820.6px;top:22.0px;width:0.8px;height:383.0px;background:#303030;"></div>
<svg style="left:6.0px;top:2.7px" width="11" height="10" viewBox="0 0 11 10"><circle cx="2.200" cy="2.200" r="1.300" fill="#e6e6e6"/><circle cx="5.600" cy="3.600" r="1.300" fill="#e6e6e6"/><circle cx="3.600" cy="7" r="1.700" fill="#e6e6e6"/><circle cx="8.600" cy="7.400" r="1.300" fill="#e6e6e6"/><path d="M2.200 2.200L5.600 3.600 3.600 7" stroke="#bbb" stroke-width=".5" fill="none"/></svg>
<svg style="left:19.2px;top:6.2px" width="6" height="4" viewBox="0 0 6 4"><path d="M.5 .5l2.5 2.6 2.5-2.6" stroke="#ddd" stroke-width=".9" fill="none"/></svg>
<div class="a" style="left:28.4px;top:2.2px;width:49.6px;height:11.0px;background:#282828;border-radius:2.500px"></div>
<div class="t" style="left:33.5px;top:3.2px;color:#e6e6e6;">Modifier</div>
<svg style="left:71.0px;top:6.2px" width="6" height="4" viewBox="0 0 6 4"><path d="M.5 .5l2.5 2.6 2.5-2.6" stroke="#ddd" stroke-width=".9" fill="none"/></svg>
<div class="t" style="left:85.1px;top:3.2px;color:#e6e6e6;">View</div>
<div class="t" style="left:110.8px;top:3.2px;color:#e6e6e6;">Select</div>
<div class="t" style="left:141.0px;top:3.2px;color:#e6e6e6;">Add</div>
<div class="t" style="left:164.1px;top:3.2px;color:#e6e6e6;">Node</div>
<div class="a" style="left:335.6px;top:1.6px;width:20.4px;height:11.7px;background:#282828;border-radius:2.500px 0 0 2.500px"></div>
<svg style="left:338.0px;top:2.4px" width="10" height="10" viewBox="0 0 10 10"><rect x=".6" y=".8" width="5.600" height="3.600" rx="1" fill="#e6e6e6"/><rect x=".6" y="5.600" width="5.600" height="3.600" rx="1" fill="#e6e6e6"/><path d="M6.200 2.600c3.400 0 3.400 4.800 0 4.800" fill="none" stroke="#e6e6e6" stroke-width=".9"/><rect x="1.400" y="2.600" width="4" height=".8" fill="#282828"/><rect x="1.400" y="7.400" width="4" height=".8" fill="#282828"/></svg>
<svg style="left:349.4px;top:6.0px" width="6" height="4" viewBox="0 0 6 4"><path d="M.5 .5l2.5 2.6 2.5-2.6" stroke="#ddd" stroke-width=".9" fill="none"/></svg>
<div class="a" style="left:356.0px;top:1.6px;width:65.4px;height:11.7px;background:#1d1d1d;box-shadow:inset 0 0 0 .5px #3a3a3a"></div>
<div class="t" style="left:360.2px;top:3.0px;color:#e6e6e6;">Geometry Nodes</div>
<div class="a" style="left:421.4px;top:1.6px;width:12.0px;height:11.7px;background:#545454;"></div>
<div class="a" style="left:433.8px;top:1.6px;width:12.0px;height:11.7px;background:#545454;"></div>
<div class="a" style="left:446.2px;top:1.6px;width:12.0px;height:11.7px;background:#545454;border-radius:0 2.500px 2.500px 0"></div>
<svg style="left:422.6px;top:2.4px" width="10" height="10" viewBox="0 0 10 10"><path d="M5 .8l3.600 1.200v3c0 2-1.600 3.400-3.600 4.200C3 8.400 1.400 7 1.400 5V2z" fill="none" stroke="#ddd" stroke-width=".9"/></svg>
<svg style="left:435.0px;top:2.4px" width="10" height="10" viewBox="0 0 10 10"><rect x="3.200" y="1" width="5.800" height="5.800" rx="1" fill="none" stroke="#eee" stroke-width=".9"/><path d="M1.200 3.400v4.200a1.200 1.200 0 0 0 1.200 1.200h4.200" fill="none" stroke="#eee" stroke-width=".9"/></svg>
<svg style="left:448.8px;top:3.9px" width="7" height="7" viewBox="0 0 7 7"><path d="M1 1l5 5M6 1l-5 5" stroke="#eee" stroke-width=".9"/></svg>
<svg style="left:463.4px;top:2.4px" width="10" height="10" viewBox="0 0 10 10"><path d="M5.600 1.200l3.200 3.200-1 .2-1.600 1.600-.1 1.900-1.500-1.500L1.200 9.400l2.800-3.400-1.500-1.500 1.900-.1 1.600-1.600z" fill="none" stroke="#c8c8c8" stroke-width=".8" stroke-linejoin="round"/></svg>
<div class="a" style="left:759.0px;top:1.6px;width:12.4px;height:11.7px;background:#545454;border-radius:2.500px 0 0 2.500px"></div>
<svg style="left:760.2px;top:2.4px" width="10" height="10" viewBox="0 0 10 10"><path d="M2.200 8.600V4.200a2.900 2.900 0 0 1 5.800 0v2.200M4.200 6.600V4.400a.9.900 0 0 1 1.800 0v4.200" stroke="#999" stroke-width=".9" fill="none"/></svg>
<div class="a" style="left:771.8px;top:1.6px;width:18.0px;height:11.7px;background:#282828;border-radius:0 2.500px 2.500px 0"></div>
<svg style="left:773.0px;top:2.4px" width="10" height="10" viewBox="0 0 10 10"><path d="M1.400 1.400h3M6 1.400h3M1.400 5h3M6 5h3M1.400 8.600h3M6 8.600h3" stroke="#e6e6e6" stroke-width="1" stroke-dasharray="1 1"/><path d="M3 1v8M7 1v8" stroke="#e6e6e6" stroke-width=".8"/></svg>
<svg style="left:783.0px;top:6.0px" width="6" height="4" viewBox="0 0 6 4"><path d="M.5 .5l2.5 2.6 2.5-2.6" stroke="#ddd" stroke-width=".9" fill="none"/></svg>
<div class="a" style="left:795.0px;top:1.6px;width:12.4px;height:11.7px;background:#4772b3;border-radius:2.500px 0 0 2.500px"></div>
<svg style="left:796.2px;top:2.4px" width="10" height="10" viewBox="0 0 10 10"><circle cx="4" cy="5.800" r="3.200" fill="none" stroke="#fff" stroke-width="1"/><circle cx="6" cy="4" r="3.200" fill="#fff"/></svg>
<div class="a" style="left:807.8px;top:1.6px;width:10.4px;height:11.7px;background:#282828;border-radius:0 2.500px 2.500px 0"></div>
<svg style="left:810.0px;top:6.0px" width="6" height="4" viewBox="0 0 6 4"><path d="M.5 .5l2.5 2.6 2.5-2.6" stroke="#ddd" stroke-width=".9" fill="none"/></svg>
<svg style="left:820.6px;top:25.399999999999977px" width="4" height="6" viewBox="0 0 4 6"><path d="M3.400 .5L.8 3l2.600 2.500" stroke="#aaa" stroke-width=".8" fill="none"/></svg>
<svg style="left:0.4px;top:25.7px" width="4" height="6" viewBox="0 0 4 6"><path d="M.5 .5l2.6 2.5-2.6 2.5" stroke="#ccc" stroke-width=".9" fill="none"/></svg>
<svg style="left:10.6px;top:23.5px" width="10" height="10" viewBox="0 0 10 10"><rect x="2.600" y="2.600" width="4.800" height="4.800" fill="#fff"/><path d="M.6 3V1.600a1 1 0 0 1 1-1H3M7 .6h1.400a1 1 0 0 1 1 1V3M9.400 7v1.400a1 1 0 0 1-1 1H7M3 9.400H1.600a1 1 0 0 1-1-1V7" stroke="#e0e0e0" stroke-width=".9" fill="none"/></svg>
<div class="t" style="left:26.3px;top:24.1px;color:#e6e6e6;">Roof01</div>
<svg style="left:61.0px;top:25.7px" width="4" height="6" viewBox="0 0 4 6"><path d="M.5 .5l2.6 2.5-2.6 2.5" stroke="#ccc" stroke-width=".9" fill="none"/></svg>
<svg style="left:70.2px;top:23.5px" width="10" height="10" viewBox="0 0 10 10"><circle cx="2.200" cy="2.200" r="1.300" fill="#e6e6e6"/><circle cx="5.600" cy="3.600" r="1.300" fill="#e6e6e6"/><circle cx="3.600" cy="7" r="1.700" fill="#e6e6e6"/><circle cx="8.600" cy="7.400" r="1.300" fill="#e6e6e6"/></svg>
<div class="t" style="left:85.1px;top:24.1px;color:#e6e6e6;">GeometryNodes</div>
<svg style="left:149.4px;top:25.7px" width="4" height="6" viewBox="0 0 4 6"><path d="M.5 .5l2.6 2.5-2.6 2.5" stroke="#ccc" stroke-width=".9" fill="none"/></svg>
<svg style="left:158.6px;top:23.5px" width="10" height="10" viewBox="0 0 10 10"><rect x=".6" y=".8" width="5.600" height="3.600" rx="1" fill="#e6e6e6"/><rect x=".6" y="5.600" width="5.600" height="3.600" rx="1" fill="#e6e6e6"/><path d="M6.200 2.600c3.400 0 3.400 4.800 0 4.800" fill="none" stroke="#e6e6e6" stroke-width=".9"/><rect x="1.400" y="2.600" width="4" height=".8" fill="#282828"/><rect x="1.400" y="7.400" width="4" height=".8" fill="#282828"/></svg>
<div class="t" style="left:173.4px;top:24.1px;color:#e6e6e6;">Geometry Nodes</div>
</div>
<div class="area" id="tl" style="left:1px;top:685px;width:825px;height:53px;background:#1d1d1d">
<div class="a" style="left:0.0px;top:30.0px;width:825.0px;height:23.0px;background:#222;"></div>
<div class="a" style="left:0.0px;top:30.0px;width:393.7px;height:23.0px;background:#2d2d2d;"></div>
<div class="a" style="left:-4.2px;top:30.0px;width:0.7px;height:23.0px;background:#232323;"></div>
<div class="a" style="left:12.4px;top:30.0px;width:0.7px;height:23.0px;background:#232323;"></div>
<div class="a" style="left:28.9px;top:30.0px;width:0.7px;height:23.0px;background:#232323;"></div>
<div class="a" style="left:45.5px;top:30.0px;width:0.7px;height:23.0px;background:#232323;"></div>
<div class="a" style="left:62.1px;top:30.0px;width:0.7px;height:23.0px;background:#232323;"></div>
<div class="a" style="left:78.6px;top:30.0px;width:0.7px;height:23.0px;background:#232323;"></div>
<div class="a" style="left:95.2px;top:30.0px;width:0.7px;height:23.0px;background:#232323;"></div>
<div class="a" style="left:111.8px;top:30.0px;width:0.7px;height:23.0px;background:#232323;"></div>
<div class="a" style="left:128.3px;top:30.0px;width:0.7px;height:23.0px;background:#232323;"></div>
<div class="a" style="left:144.9px;top:30.0px;width:0.7px;height:23.0px;background:#232323;"></div>
<div class="a" style="left:161.5px;top:30.0px;width:0.7px;height:23.0px;background:#232323;"></div>
<div class="a" style="left:178.0px;top:30.0px;width:0.7px;height:23.0px;background:#232323;"></div>
<div class="a" style="left:194.6px;top:30.0px;width:0.7px;height:23.0px;background:#232323;"></div>
<div class="a" style="left:211.2px;top:30.0px;width:0.7px;height:23.0px;background:#232323;"></div>
<div class="a" style="left:227.7px;top:30.0px;width:0.7px;height:23.0px;background:#232323;"></div>
<div class="a" style="left:244.3px;top:30.0px;width:0.7px;height:23.0px;background:#232323;"></div>
<div class="a" style="left:260.9px;top:30.0px;width:0.7px;height:23.0px;background:#232323;"></div>
<div class="a" style="left:277.4px;top:30.0px;width:0.7px;height:23.0px;background:#232323;"></div>
<div class="a" style="left:294.0px;top:30.0px;width:0.7px;height:23.0px;background:#232323;"></div>
<div class="a" style="left:310.6px;top:30.0px;width:0.7px;height:23.0px;background:#232323;"></div>
<div class="a" style="left:327.1px;top:30.0px;width:0.7px;height:23.0px;background:#232323;"></div>
<div class="a" style="left:343.7px;top:30.0px;width:0.7px;height:23.0px;background:#232323;"></div>
<div class="a" style="left:360.2px;top:30.0px;width:0.7px;height:23.0px;background:#232323;"></div>
<div class="a" style="left:376.8px;top:30.0px;width:0.7px;height:23.0px;background:#232323;"></div>
<div class="a" style="left:393.4px;top:30.0px;width:0.7px;height:23.0px;background:#232323;"></div>
<div class="a" style="left:409.9px;top:30.0px;width:0.7px;height:23.0px;background:#1b1b1b;"></div>
<div class="a" style="left:426.5px;top:30.0px;width:0.7px;height:23.0px;background:#1b1b1b;"></div>
<div class="a" style="left:443.1px;top:30.0px;width:0.7px;height:23.0px;background:#1b1b1b;"></div>
<div class="a" style="left:459.6px;top:30.0px;width:0.7px;height:23.0px;background:#1b1b1b;"></div>
<div class="a" style="left:476.2px;top:30.0px;width:0.7px;height:23.0px;background:#1b1b1b;"></div>
<div class="a" style="left:492.8px;top:30.0px;width:0.7px;height:23.0px;background:#1b1b1b;"></div>
<div class="a" style="left:509.3px;top:30.0px;width:0.7px;height:23.0px;background:#1b1b1b;"></div>
<div class="a" style="left:525.9px;top:30.0px;width:0.7px;height:23.0px;background:#1b1b1b;"></div>
<div class="a" style="left:542.5px;top:30.0px;width:0.7px;height:23.0px;background:#1b1b1b;"></div>
<div class="a" style="left:559.0px;top:30.0px;width:0.7px;height:23.0px;background:#1b1b1b;"></div>
<div class="a" style="left:575.6px;top:30.0px;width:0.7px;height:23.0px;background:#1b1b1b;"></div>
<div class="a" style="left:592.2px;top:30.0px;width:0.7px;height:23.0px;background:#1b1b1b;"></div>
<div class="a" style="left:608.7px;top:30.0px;width:0.7px;height:23.0px;background:#1b1b1b;"></div>
<div class="a" style="left:625.3px;top:30.0px;width:0.7px;height:23.0px;background:#1b1b1b;"></div>
<div class="a" style="left:641.9px;top:30.0px;width:0.7px;height:23.0px;background:#1b1b1b;"></div>
<div class="a" style="left:658.4px;top:30.0px;width:0.7px;height:23.0px;background:#1b1b1b;"></div>
<div class="a" style="left:675.0px;top:30.0px;width:0.7px;height:23.0px;background:#1b1b1b;"></div>
<div class="a" style="left:691.6px;top:30.0px;width:0.7px;height:23.0px;background:#1b1b1b;"></div>
<div class="a" style="left:708.1px;top:30.0px;width:0.7px;height:23.0px;background:#1b1b1b;"></div>
<div class="a" style="left:724.7px;top:30.0px;width:0.7px;height:23.0px;background:#1b1b1b;"></div>
<div class="a" style="left:741.2px;top:30.0px;width:0.7px;height:23.0px;background:#1b1b1b;"></div>
<div class="a" style="left:757.8px;top:30.0px;width:0.7px;height:23.0px;background:#1b1b1b;"></div>
<div class="a" style="left:774.4px;top:30.0px;width:0.7px;height:23.0px;background:#1b1b1b;"></div>
<div class="a" style="left:790.9px;top:30.0px;width:0.7px;height:23.0px;background:#1b1b1b;"></div>
<div class="a" style="left:807.5px;top:30.0px;width:0.7px;height:23.0px;background:#1b1b1b;"></div>
<div class="t c" style="left:14.2px;width:30px;text-align:center;top:18.3px;color:#bdbdbd">10</div>
<div class="t c" style="left:47.4px;width:30px;text-align:center;top:18.3px;color:#bdbdbd">20</div>
<div class="t c" style="left:80.5px;width:30px;text-align:center;top:18.3px;color:#bdbdbd">30</div>
<div class="t c" style="left:113.6px;width:30px;text-align:center;top:18.3px;color:#bdbdbd">40</div>
<div class="t c" style="left:146.8px;width:30px;text-align:center;top:18.3px;color:#bdbdbd">50</div>
<div class="t c" style="left:179.9px;width:30px;text-align:center;top:18.3px;color:#bdbdbd">60</div>
<div class="t c" style="left:213.0px;width:30px;text-align:center;top:18.3px;color:#bdbdbd">70</div>
<div class="t c" style="left:246.2px;width:30px;text-align:center;top:18.3px;color:#bdbdbd">80</div>
<div class="t c" style="left:279.3px;width:30px;text-align:center;top:18.3px;color:#bdbdbd">90</div>
<div class="t c" style="left:312.4px;width:30px;text-align:center;top:18.3px;color:#bdbdbd">100</div>
<div class="t c" style="left:345.6px;width:30px;text-align:center;top:18.3px;color:#bdbdbd">110</div>
<div class="t c" style="left:378.7px;width:30px;text-align:center;top:18.3px;color:#bdbdbd">120</div>
<div class="t c" style="left:411.8px;width:30px;text-align:center;top:18.3px;color:#bdbdbd">130</div>
<div class="t c" style="left:444.9px;width:30px;text-align:center;top:18.3px;color:#bdbdbd">140</div>
<div class="t c" style="left:478.1px;width:30px;text-align:center;top:18.3px;color:#bdbdbd">150</div>
<div class="t c" style="left:511.2px;width:30px;text-align:center;top:18.3px;color:#bdbdbd">160</div>
<div class="t c" style="left:544.3px;width:30px;text-align:center;top:18.3px;color:#bdbdbd">170</div>
<div class="t c" style="left:577.5px;width:30px;text-align:center;top:18.3px;color:#bdbdbd">180</div>
<div class="t c" style="left:610.6px;width:30px;text-align:center;top:18.3px;color:#bdbdbd">190</div>
<div class="t c" style="left:643.7px;width:30px;text-align:center;top:18.3px;color:#bdbdbd">200</div>
<div class="t c" style="left:676.9px;width:30px;text-align:center;top:18.3px;color:#bdbdbd">210</div>
<div class="t c" style="left:710.0px;width:30px;text-align:center;top:18.3px;color:#bdbdbd">220</div>
<div class="t c" style="left:743.1px;width:30px;text-align:center;top:18.3px;color:#bdbdbd">230</div>
<div class="t c" style="left:776.2px;width:30px;text-align:center;top:18.3px;color:#bdbdbd">240</div>
<div class="a" style="left:0.0px;top:17.8px;width:7.4px;height:10.4px;background:#4772b3;border-radius:2.5px"></div>
<div class="t r" style="right:819.6px;top:18.4px;color:#fff">1</div>
<svg style="left:0.6000000000000001px;top:28px" width="4" height="3" viewBox="0 0 4 3"><path d="M0 0h3.400L1 2.800z" fill="#9a9a9a"/></svg>
<div class="a" style="left:35.0px;top:46.7px;width:753.0px;height:4.6px;background:#4d4d4d;border-radius:2.3px"></div>
<svg style="left:35.6px;top:47.200000000000045px" width="4" height="4"><circle cx="2" cy="2" r="1.600" fill="#1d1d1d"/></svg>
<svg style="left:783.4px;top:47.200000000000045px" width="4" height="4"><circle cx="2" cy="2" r="1.600" fill="#1d1d1d"/></svg>
<div class="a" style="left:5.6px;top:2.8px;width:18.0px;height:10.6px;background:#282828;border-radius:2.500px"></div>
<svg style="left:7.2px;top:3.1px" width="10" height="10" viewBox="0 0 10 10"><circle cx="5" cy="5" r="4.500" fill="#f0f0f0"/><path d="M5 2.400V5l2 1.600" stroke="#282828" stroke-width="1" fill="none"/></svg>
<svg style="left:18.4px;top:7.0px" width="5.3" height="3.5" viewBox="0 0 6 4"><path d="M.5 .5l2.5 2.6 2.5-2.6" stroke="#ddd" stroke-width=".9" fill="none"/></svg>
<div class="a" style="left:29.0px;top:2.8px;width:42.6px;height:10.6px;background:#282828;border-radius:2.500px"></div>
<div class="t" style="left:33.0px;top:2.9px;color:#e6e6e6;">Playback</div>
<svg style="left:65.4px;top:7.3px" width="5.3" height="3.5" viewBox="0 0 6 4"><path d="M.5 .5l2.5 2.6 2.5-2.6" stroke="#ddd" stroke-width=".9" fill="none"/></svg>
<div class="a" style="left:74.0px;top:2.8px;width:36.6px;height:10.6px;background:#282828;border-radius:2.500px"></div>
<div class="t" style="left:77.6px;top:2.9px;color:#e6e6e6;">Keying</div>
<svg style="left:104.2px;top:7.3px" width="5.3" height="3.5" viewBox="0 0 6 4"><path d="M.5 .5l2.5 2.6 2.5-2.6" stroke="#ddd" stroke-width=".9" fill="none"/></svg>
<div class="t" style="left:117.9px;top:2.9px;color:#e6e6e6;">View</div>
<div class="t" style="left:143.1px;top:2.9px;color:#e6e6e6;">Marker</div>
<div class="a" style="left:353.2px;top:2.8px;width:12.6px;height:10.6px;background:#545454;border-radius:2.500px 0 0 2.500px"></div>
<svg style="left:354.5px;top:3.1px" width="10" height="10" viewBox="0 0 10 10"><circle cx="5" cy="5" r="3.400" fill="none" stroke="#bbb" stroke-width="1.100"/></svg>
<div class="a" style="left:366.2px;top:2.8px;width:10.0px;height:10.6px;background:#2b2b2b;border-radius:0 2.500px 2.500px 0"></div>
<svg style="left:368.4px;top:6.4px" width="5.3" height="3.5" viewBox="0 0 6 4"><path d="M.5 .5l2.5 2.6 2.5-2.6" stroke="#555" stroke-width=".9" fill="none"/></svg>
<div class="a" style="left:382.2px;top:2.8px;width:74.8px;height:10.6px;background:#545454;border-radius:2.500px"></div>
<svg style="left:382.2px;top:3.1000000000000227px" width="75" height="10" viewBox="0 0 75 10"><path d="M3.7000000000000113 2.400v5.200" stroke="#f0f0f0" stroke-width="1.100"/><path d="M9.300000000000011 2.400L4.900000000000011 5l4.400 2.600z" fill="#f0f0f0"/><path d="M16.20000000000001 3l1.800 2-1.800 2-1.800-2z" fill="#f0f0f0"/><path d="M23.20000000000001 2.400L18.80000000000001 5l4.400 2.600z" fill="#f0f0f0"/><path d="M33.2 2.400L28.8 5l4.400 2.600z" fill="#f0f0f0"/><path d="M41.3 2.400L45.7 5l-4.400 2.600z" fill="#f0f0f0"/><path d="M51.50000000000003 2.400L55.900000000000034 5l-4.400 2.600z" fill="#f0f0f0"/><path d="M58.500000000000036 3l1.800 2-1.800 2-1.800-2z" fill="#f0f0f0"/><path d="M65.40000000000003 2.400L69.80000000000004 5l-4.400 2.600z" fill="#f0f0f0"/><path d="M71.00000000000003 2.400v5.200" stroke="#f0f0f0" stroke-width="1.100"/></svg>
<div class="a" style="left:394.7px;top:2.8px;width:0.5px;height:10.6px;background:#3a3a3a;"></div>
<div class="a" style="left:407.1px;top:2.8px;width:0.5px;height:10.6px;background:#3a3a3a;"></div>
<div class="a" style="left:419.5px;top:2.8px;width:0.5px;height:10.6px;background:#3a3a3a;"></div>
<div class="a" style="left:431.9px;top:2.8px;width:0.5px;height:10.6px;background:#3a3a3a;"></div>
<div class="a" style="left:444.3px;top:2.8px;width:0.5px;height:10.6px;background:#3a3a3a;"></div>
<div class="a" style="left:646.2px;top:2.9px;width:46.4px;height:10.6px;background:#545454;border-radius:2.500px"></div>
<div class="t c" style="left:654.4px;width:30px;text-align:center;top:3.7px;color:#e6e6e6">1</div>
<svg style="left:697.5px;top:3.2px" width="10" height="10" viewBox="0 0 10 10"><circle cx="5" cy="5.600" r="3.500" fill="none" stroke="#ddd" stroke-width="1"/><path d="M5 3.600v2l1.200 1M3.800 1h2.400" stroke="#ddd" stroke-width=".9" fill="none"/></svg>
<div class="a" style="left:708.5px;top:2.9px;width:55.9px;height:10.6px;background:#545454;border-radius:2.500px 0 0 2.500px"></div>
<div class="t" style="left:718.0px;top:3.7px;color:#e6e6e6;">Start</div>
<div class="t r" style="right:68.3px;top:3.7px;color:#e6e6e6">1</div>
<div class="a" style="left:765.0px;top:2.9px;width:54.0px;height:10.6px;background:#545454;border-radius:0 2.500px 2.500px 0"></div>
<div class="t" style="left:774.3px;top:3.7px;color:#e6e6e6;">End</div>
<div class="t r" style="right:14.0px;top:3.7px;color:#e6e6e6">120</div>
<svg style="left:820.6px;top:25.700000000000045px" width="4" height="6" viewBox="0 0 4 6"><path d="M3.400 .5L.8 3l2.600 2.500" stroke="#aaa" stroke-width=".8" fill="none"/></svg>
</div>
<div class="a" style="left:1px;top:738px;width:998px;height:13.500px;background:#181818;border-radius:0 0 5px 5px"></div>
<svg style="left:958px;top:740.400px" width="10" height="10" viewBox="0 0 10 10"><circle cx="5" cy="5" r="3.600" fill="none" stroke="#8a8a8a" stroke-width=".9"/><path d="M2.200 5c1-2 4.600-2 5.600 0M5 1.400v7.200" stroke="#8a8a8a" stroke-width=".7" fill="none"/><path d="M1.200 1.200l7.600 7.600" stroke="#aaa" stroke-width="1"/></svg>
<div class="a" style="left:972.200px;top:741px;width:.8px;height:9px;background:#8a8a8a"></div>
<div class="t" style="left:975.400px;top:740.600px;color:#9c9c9c">4.3.2</div>
<div class="a" style="left:584.0px;top:414.8px;width:309.0px;height:158.6px;background:#181818;border-radius:3px;box-shadow:0 2px 6px rgba(0,0,0,.55)"></div>
<div class="a" style="left:587.2px;top:419.1px;width:302.3px;height:12.9px;background:#1d1d1d;border-radius:3px;box-shadow:inset 0 0 0 .6px #3e3e3e"></div>
<svg style="left:589.400px;top:420.600px" width="10" height="10" viewBox="0 0 10 10"><circle cx="6" cy="3.800" r="2.900" fill="none" stroke="#ddd" stroke-width="1"/><path d="M3.900 5.900L.8 9" stroke="#ddd" stroke-width="1.100"/></svg>
<div class="t" style="left:603px;top:421.400px;color:#fff">Value</div>
<div class="a" style="left:621.9px;top:421.2px;width:0.9px;height:8.8px;background:#5a8ae0;"></div>
<div class="a" style="left:587.2px;top:442.9px;width:302.3px;height:11.6px;background:#454545;border-radius:2.500px"></div>
<div class="t" style="left:589.100px;top:444.7px;color:#8c8c8c">Input <span style="font-size:5px;position:relative;top:-.6px">▸</span> Constant <span style="font-size:5px;position:relative;top:-.6px">▸</span> <span style="color:#f0f0f0">Value</span></div>
<div class="t" style="left:589.100px;top:457.3px;color:#8c8c8c">Utilities <span style="font-size:5px;position:relative;top:-.6px">▸</span> Math <span style="font-size:5px;position:relative;top:-.6px">▸</span> <span style="color:#f0f0f0">Hash Value</span></div>
<div class="t" style="left:589.100px;top:469.8px;color:#8c8c8c">Utilities <span style="font-size:5px;position:relative;top:-.6px">▸</span> <span style="color:#f0f0f0">Random Value</span></div>
<div class="t" style="left:589.100px;top:482.4px;color:#8c8c8c">Utilities <span style="font-size:5px;position:relative;top:-.6px">▸</span> Text <span style="font-size:5px;position:relative;top:-.6px">▸</span> <span style="color:#f0f0f0">Value to String</span></div>
<div class="t" style="left:589.100px;top:495.0px;color:#8c8c8c">Mesh <span style="font-size:5px;position:relative;top:-.6px">▸</span> Operations <span style="font-size:5px;position:relative;top:-.6px">▸</span> <span style="color:#f0f0f0">Mesh to Volume</span></div>
<div class="t" style="left:589.100px;top:507.6px;color:#8c8c8c">Point <span style="font-size:5px;position:relative;top:-.6px">▸</span> <span style="color:#f0f0f0">Distribute Points in Volume</span></div>
<div class="t" style="left:589.100px;top:520.1px;color:#8c8c8c">Point <span style="font-size:5px;position:relative;top:-.6px">▸</span> <span style="color:#f0f0f0">Points to Volume</span></div>
<div class="t" style="left:589.100px;top:532.7px;color:#8c8c8c">Utilities <span style="font-size:5px;position:relative;top:-.6px">▸</span> Field <span style="font-size:5px;position:relative;top:-.6px">▸</span> <span style="color:#f0f0f0">Evaluate at Index</span></div>
<div class="t" style="left:589.100px;top:545.3px;color:#8c8c8c">Utilities <span style="font-size:5px;position:relative;top:-.6px">▸</span> Field <span style="font-size:5px;position:relative;top:-.6px">▸</span> <span style="color:#f0f0f0">Evaluate on Domain</span></div>
<div class="t" style="left:589.100px;top:557.8px;color:#8c8c8c">Volume <span style="font-size:5px;position:relative;top:-.6px">▸</span> Operations <span style="font-size:5px;position:relative;top:-.6px">▸</span> <span style="color:#f0f0f0">Volume to Mesh</span></div>
<svg style="left:731.400px;top:566.400px" width="6" height="4" viewBox="0 0 6 4"><path d="M0 0h6L3 4z" fill="#e6e6e6"/></svg>
<div class="a" style="left:827.6px;top:335.5px;width:2.0px;height:15.0px;background:#505050;border-radius:1px"></div>
<div class="a" style="left:580px;top:411.600px;width:104px;height:50.600px;border:4.600px solid #6fdc45;box-sizing:border-box"></div>
</div></body></html>
